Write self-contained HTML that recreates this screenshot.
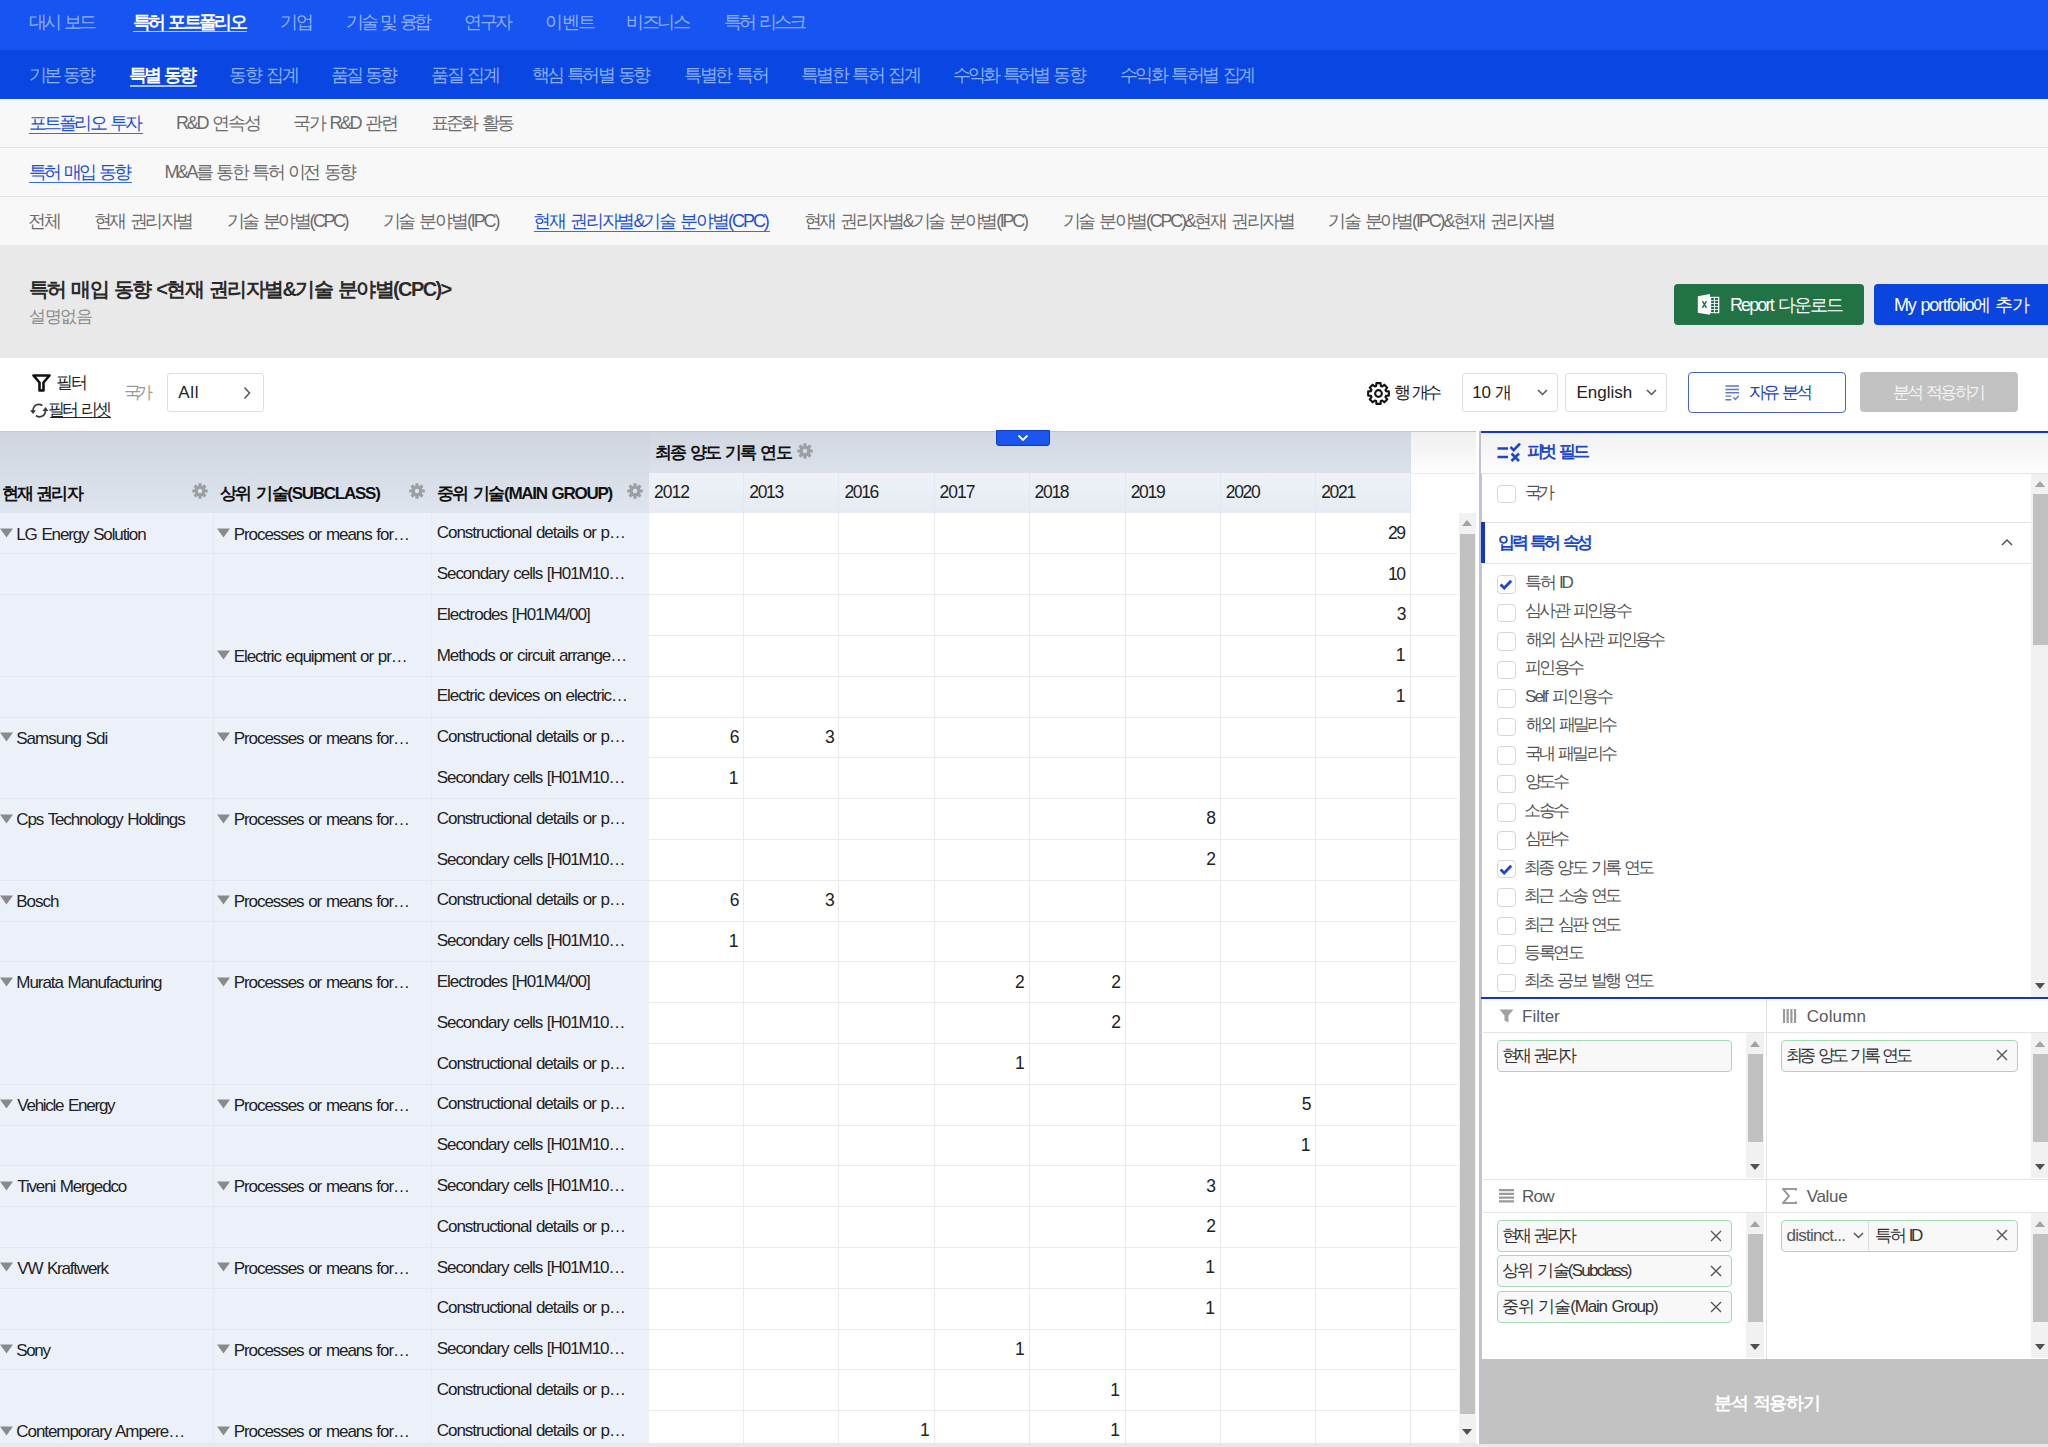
<!DOCTYPE html><html><head><meta charset="utf-8"><style>
html,body{margin:0;padding:0;width:2048px;height:1447px;overflow:hidden;background:#fff;font-family:"Liberation Sans",sans-serif;}
div,svg{position:absolute}
</style></head><body>
<div style="position:absolute;left:0px;top:0px;width:2048px;height:50px;background:#1854f1"></div>
<div style="position:absolute;left:0px;top:50px;width:2048px;height:49px;background:#0a47e2"></div>
<div style="position:absolute;left:133px;top:30.6px;width:114px;height:1.3px;background:#b4ccff"></div>
<div style="position:absolute;left:130px;top:85.2px;width:67px;height:1.5px;background:#a9c4ff"></div>
<div style="position:absolute;left:0px;top:99px;width:2048px;height:146px;background:#f8f8f8"></div>
<div style="position:absolute;left:0px;top:147px;width:2048px;height:1px;background:#e3e3e3"></div>
<div style="position:absolute;left:0px;top:196px;width:2048px;height:1px;background:#e3e3e3"></div>
<div style="position:absolute;left:29px;top:132.8px;width:114px;height:1.2px;background:#3b6be3"></div>
<div style="position:absolute;left:29px;top:181.8px;width:103px;height:1.2px;background:#3b6be3"></div>
<div style="position:absolute;left:534px;top:230.8px;width:236px;height:1.2px;background:#3b6be3"></div>
<div style="position:absolute;left:0px;top:245px;width:2048px;height:113px;background:#e9e9e9"></div>
<div style="position:absolute;left:1674px;top:284px;width:190px;height:41px;background:#217346;border-radius:4px"></div>
<div style="position:absolute;left:1874px;top:284px;width:180px;height:41px;background:#0b45e0;border-radius:4px"></div>
<svg style="position:absolute;left:1696px;top:293px" width="26" height="24" viewBox="0 0 26 24">
<rect x="13.5" y="3.8" width="9.8" height="16.4" fill="#fff"/><rect x="15.1" y="5.0" width="3.0" height="2.2" fill="#217346"/><rect x="15.1" y="8.0" width="3.0" height="2.2" fill="#217346"/><rect x="15.1" y="11.0" width="3.0" height="2.2" fill="#217346"/><rect x="15.1" y="14.0" width="3.0" height="2.2" fill="#217346"/><rect x="15.1" y="17.0" width="3.0" height="2.2" fill="#217346"/><rect x="19.0" y="5.0" width="3.0" height="2.2" fill="#217346"/><rect x="19.0" y="8.0" width="3.0" height="2.2" fill="#217346"/><rect x="19.0" y="11.0" width="3.0" height="2.2" fill="#217346"/><rect x="19.0" y="14.0" width="3.0" height="2.2" fill="#217346"/><rect x="19.0" y="17.0" width="3.0" height="2.2" fill="#217346"/>
<path d="M1.8 3.2L14 1v20.8L1.8 19.8z" fill="#fff"/>
<path d="M6.4 8.2l4 6.6M10.4 8.2l-4 6.6" stroke="#217346" stroke-width="1.5"/>
</svg>
<div style="position:absolute;left:0px;top:358px;width:2048px;height:73px;background:#ffffff"></div>
<svg style="position:absolute;left:32px;top:374px" width="19" height="18" viewBox="0 0 19 18">
<path d="M1.5 1.5h16l-6 7v8h-4v-8z" fill="none" stroke="#111" stroke-width="2.6" stroke-linejoin="round"/></svg>
<svg style="position:absolute;left:28px;top:400px" width="22" height="20" viewBox="0 0 22 20">
<path d="M13.8 5.2C11 3.3 5.6 4.3 5 10.6" fill="none" stroke="#3a3a3a" stroke-width="1.7" stroke-linecap="round"/><path d="M2 10.2h6L5 14z" fill="#3a3a3a"/>
<path d="M8.6 16C11.4 17.8 17 16.8 17.5 10.6" fill="none" stroke="#3a3a3a" stroke-width="1.7" stroke-linecap="round"/><path d="M14.5 11h6l-3-4z" fill="#3a3a3a"/></svg>
<div style="position:absolute;left:49.5px;top:416.8px;width:61.5px;height:1.3px;background:#222"></div>
<div style="position:absolute;left:167px;top:372.5px;width:96.5px;height:39px;border:1px solid #dedede;border-radius:3px;box-sizing:border-box;background:#fff"></div>
<svg style="position:absolute;left:242px;top:386px" width="10" height="14" viewBox="0 0 10 14"><path d="M2.5 1.5l5 5.5-5 5.5" fill="none" stroke="#555" stroke-width="1.5"/></svg>
<svg style="position:absolute;left:1366.5px;top:382px" width="23" height="23" viewBox="0 0 24 24">
<path d="M9.58 4.17 L9.81 1.22 L14.19 1.22 L14.42 4.17 L15.83 4.75 L18.08 2.83 L21.17 5.92 L19.25 8.17 L19.83 9.58 L22.78 9.81 L22.78 14.19 L19.83 14.42 L19.25 15.83 L21.17 18.08 L18.08 21.17 L15.83 19.25 L14.42 19.83 L14.19 22.78 L9.81 22.78 L9.58 19.83 L8.17 19.25 L5.92 21.17 L2.83 18.08 L4.75 15.83 L4.17 14.42 L1.22 14.19 L1.22 9.81 L4.17 9.58 L4.75 8.17 L2.83 5.92 L5.92 2.83 L8.17 4.75Z" fill="none" stroke="#111" stroke-width="2.2" stroke-linejoin="round"/>
<circle cx="12" cy="12" r="3.5" fill="none" stroke="#111" stroke-width="2.2"/></svg>
<div style="position:absolute;left:1461.5px;top:372.5px;width:96px;height:39.5px;border:1px solid #dedede;border-radius:3px;box-sizing:border-box;background:#fff"></div>
<svg style="position:absolute;left:1537px;top:389px" width="11" height="7" viewBox="0 0 11 7"><path d="M1 1l4.5 4.5L10 1" fill="none" stroke="#555" stroke-width="1.5"/></svg>
<div style="position:absolute;left:1564.5px;top:372.5px;width:102.5px;height:39.5px;border:1px solid #dedede;border-radius:3px;box-sizing:border-box;background:#fff"></div>
<svg style="position:absolute;left:1645.5px;top:389px" width="11" height="7" viewBox="0 0 11 7"><path d="M1 1l4.5 4.5L10 1" fill="none" stroke="#555" stroke-width="1.5"/></svg>
<div style="position:absolute;left:1687.5px;top:372px;width:158.5px;height:40.5px;border:1.6px solid #4a66c0;border-radius:4px;box-sizing:border-box;background:#fff"></div>
<svg style="position:absolute;left:1724px;top:384px" width="17" height="17" viewBox="0 0 17 17">
<path d="M1.5 2h13.5M1.5 5.5h13.5M1.5 8.8h13.5M1.5 12.1h5.7M1.5 15.8h5.7" stroke="#5f77c4" stroke-width="1.4"/><path d="M9.5 13.2l2 2.3 3.2-3.8" fill="none" stroke="#5f77c4" stroke-width="1.4"/></svg>
<div style="position:absolute;left:1859.5px;top:372px;width:158px;height:40px;background:#c2c2c2;border-radius:4px"></div>
<div style="position:absolute;left:0px;top:430.5px;width:1482px;height:1.5px;background:#c4c6ca"></div>
<div style="position:absolute;left:0px;top:432px;width:649px;height:81px;background:linear-gradient(#cfd5de,#dfe5ee)"></div>
<div style="position:absolute;left:649px;top:432px;width:762px;height:40.5px;background:linear-gradient(#d2d8e1,#dbe1ea)"></div>
<div style="position:absolute;left:649px;top:472.5px;width:762px;height:40.5px;background:linear-gradient(#eef2f8,#e6ebf3)"></div>
<div style="position:absolute;left:1411px;top:432px;width:68px;height:41px;background:linear-gradient(#efefef,#fdfdfd)"></div>
<div style="position:absolute;left:1411px;top:472.5px;width:68px;height:1px;background:#ececec"></div>
<div style="position:absolute;left:0px;top:513px;width:649px;height:934px;background:#ecf1f9"></div>
<div style="position:absolute;left:649px;top:513px;width:809px;height:934px;background:#ffffff"></div>
<div style="position:absolute;left:1458px;top:513px;width:20px;height:934px;background:#ffffff"></div>
<div style="position:absolute;left:743.2px;top:472.5px;width:1px;height:40px;background:#e3e8f0"></div>
<div style="position:absolute;left:743.2px;top:513px;width:1px;height:934px;background:#ebebeb"></div>
<div style="position:absolute;left:838.1px;top:472.5px;width:1px;height:40px;background:#e3e8f0"></div>
<div style="position:absolute;left:838.1px;top:513px;width:1px;height:934px;background:#ebebeb"></div>
<div style="position:absolute;left:934.0px;top:472.5px;width:1px;height:40px;background:#e3e8f0"></div>
<div style="position:absolute;left:934.0px;top:513px;width:1px;height:934px;background:#ebebeb"></div>
<div style="position:absolute;left:1028.9px;top:472.5px;width:1px;height:40px;background:#e3e8f0"></div>
<div style="position:absolute;left:1028.9px;top:513px;width:1px;height:934px;background:#ebebeb"></div>
<div style="position:absolute;left:1124.8px;top:472.5px;width:1px;height:40px;background:#e3e8f0"></div>
<div style="position:absolute;left:1124.8px;top:513px;width:1px;height:934px;background:#ebebeb"></div>
<div style="position:absolute;left:1219.7px;top:472.5px;width:1px;height:40px;background:#e3e8f0"></div>
<div style="position:absolute;left:1219.7px;top:513px;width:1px;height:934px;background:#ebebeb"></div>
<div style="position:absolute;left:1315.3px;top:472.5px;width:1px;height:40px;background:#e3e8f0"></div>
<div style="position:absolute;left:1315.3px;top:513px;width:1px;height:934px;background:#ebebeb"></div>
<div style="position:absolute;left:1410.2px;top:472.5px;width:1px;height:40px;background:#e3e8f0"></div>
<div style="position:absolute;left:1410.2px;top:513px;width:1px;height:934px;background:#ebebeb"></div>
<div style="position:absolute;left:212.5px;top:513px;width:1px;height:934px;background:#e6eaf1"></div>
<div style="position:absolute;left:430.5px;top:513px;width:1px;height:934px;background:#e6eaf1"></div>
<div style="position:absolute;left:0px;top:553.3px;width:649px;height:1px;background:#e2e7ef"></div>
<div style="position:absolute;left:649px;top:553.3px;width:809px;height:1px;background:#ebebeb"></div>
<div style="position:absolute;left:0px;top:594.1px;width:649px;height:1px;background:#e2e7ef"></div>
<div style="position:absolute;left:649px;top:594.1px;width:809px;height:1px;background:#ebebeb"></div>
<div style="position:absolute;left:649px;top:634.9px;width:809px;height:1px;background:#ebebeb"></div>
<div style="position:absolute;left:0px;top:675.7px;width:649px;height:1px;background:#e2e7ef"></div>
<div style="position:absolute;left:649px;top:675.7px;width:809px;height:1px;background:#ebebeb"></div>
<div style="position:absolute;left:0px;top:716.5px;width:649px;height:1px;background:#e2e7ef"></div>
<div style="position:absolute;left:649px;top:716.5px;width:809px;height:1px;background:#ebebeb"></div>
<div style="position:absolute;left:649px;top:757.3px;width:809px;height:1px;background:#ebebeb"></div>
<div style="position:absolute;left:0px;top:798.1px;width:649px;height:1px;background:#e2e7ef"></div>
<div style="position:absolute;left:649px;top:798.1px;width:809px;height:1px;background:#ebebeb"></div>
<div style="position:absolute;left:649px;top:838.9px;width:809px;height:1px;background:#ebebeb"></div>
<div style="position:absolute;left:0px;top:879.7px;width:649px;height:1px;background:#e2e7ef"></div>
<div style="position:absolute;left:649px;top:879.7px;width:809px;height:1px;background:#ebebeb"></div>
<div style="position:absolute;left:0px;top:920.5px;width:649px;height:1px;background:#e2e7ef"></div>
<div style="position:absolute;left:649px;top:920.5px;width:809px;height:1px;background:#ebebeb"></div>
<div style="position:absolute;left:0px;top:961.3px;width:649px;height:1px;background:#e2e7ef"></div>
<div style="position:absolute;left:649px;top:961.3px;width:809px;height:1px;background:#ebebeb"></div>
<div style="position:absolute;left:649px;top:1002.1px;width:809px;height:1px;background:#ebebeb"></div>
<div style="position:absolute;left:649px;top:1042.9px;width:809px;height:1px;background:#ebebeb"></div>
<div style="position:absolute;left:0px;top:1083.7px;width:649px;height:1px;background:#e2e7ef"></div>
<div style="position:absolute;left:649px;top:1083.7px;width:809px;height:1px;background:#ebebeb"></div>
<div style="position:absolute;left:0px;top:1124.5px;width:649px;height:1px;background:#e2e7ef"></div>
<div style="position:absolute;left:649px;top:1124.5px;width:809px;height:1px;background:#ebebeb"></div>
<div style="position:absolute;left:0px;top:1165.3px;width:649px;height:1px;background:#e2e7ef"></div>
<div style="position:absolute;left:649px;top:1165.3px;width:809px;height:1px;background:#ebebeb"></div>
<div style="position:absolute;left:0px;top:1206.1px;width:649px;height:1px;background:#e2e7ef"></div>
<div style="position:absolute;left:649px;top:1206.1px;width:809px;height:1px;background:#ebebeb"></div>
<div style="position:absolute;left:0px;top:1246.9px;width:649px;height:1px;background:#e2e7ef"></div>
<div style="position:absolute;left:649px;top:1246.9px;width:809px;height:1px;background:#ebebeb"></div>
<div style="position:absolute;left:0px;top:1287.7px;width:649px;height:1px;background:#e2e7ef"></div>
<div style="position:absolute;left:649px;top:1287.7px;width:809px;height:1px;background:#ebebeb"></div>
<div style="position:absolute;left:0px;top:1328.5px;width:649px;height:1px;background:#e2e7ef"></div>
<div style="position:absolute;left:649px;top:1328.5px;width:809px;height:1px;background:#ebebeb"></div>
<div style="position:absolute;left:0px;top:1369.3px;width:649px;height:1px;background:#e2e7ef"></div>
<div style="position:absolute;left:649px;top:1369.3px;width:809px;height:1px;background:#ebebeb"></div>
<div style="position:absolute;left:649px;top:1410.1px;width:809px;height:1px;background:#ebebeb"></div>
<div style="position:absolute;left:0px;top:1450.9px;width:649px;height:1px;background:#e2e7ef"></div>
<div style="position:absolute;left:649px;top:1450.9px;width:809px;height:1px;background:#ebebeb"></div>
<svg style="position:absolute;left:191.5px;top:482.5px" width="16" height="16" viewBox="0 0 24 24"><g fill="#9c9fa4"><rect x="9.6" y="0.3" width="4.8" height="6" rx="1" transform="rotate(0 12 12)"/><rect x="9.6" y="0.3" width="4.8" height="6" rx="1" transform="rotate(45 12 12)"/><rect x="9.6" y="0.3" width="4.8" height="6" rx="1" transform="rotate(90 12 12)"/><rect x="9.6" y="0.3" width="4.8" height="6" rx="1" transform="rotate(135 12 12)"/><rect x="9.6" y="0.3" width="4.8" height="6" rx="1" transform="rotate(180 12 12)"/><rect x="9.6" y="0.3" width="4.8" height="6" rx="1" transform="rotate(225 12 12)"/><rect x="9.6" y="0.3" width="4.8" height="6" rx="1" transform="rotate(270 12 12)"/><rect x="9.6" y="0.3" width="4.8" height="6" rx="1" transform="rotate(315 12 12)"/><circle cx="12" cy="12" r="8.3"/></g>
<circle cx="12" cy="12" r="3.3" fill="#dde3ec"/></svg>
<svg style="position:absolute;left:409.3px;top:482.5px" width="16" height="16" viewBox="0 0 24 24"><g fill="#9c9fa4"><rect x="9.6" y="0.3" width="4.8" height="6" rx="1" transform="rotate(0 12 12)"/><rect x="9.6" y="0.3" width="4.8" height="6" rx="1" transform="rotate(45 12 12)"/><rect x="9.6" y="0.3" width="4.8" height="6" rx="1" transform="rotate(90 12 12)"/><rect x="9.6" y="0.3" width="4.8" height="6" rx="1" transform="rotate(135 12 12)"/><rect x="9.6" y="0.3" width="4.8" height="6" rx="1" transform="rotate(180 12 12)"/><rect x="9.6" y="0.3" width="4.8" height="6" rx="1" transform="rotate(225 12 12)"/><rect x="9.6" y="0.3" width="4.8" height="6" rx="1" transform="rotate(270 12 12)"/><rect x="9.6" y="0.3" width="4.8" height="6" rx="1" transform="rotate(315 12 12)"/><circle cx="12" cy="12" r="8.3"/></g>
<circle cx="12" cy="12" r="3.3" fill="#dde3ec"/></svg>
<svg style="position:absolute;left:627px;top:482.5px" width="16" height="16" viewBox="0 0 24 24"><g fill="#9c9fa4"><rect x="9.6" y="0.3" width="4.8" height="6" rx="1" transform="rotate(0 12 12)"/><rect x="9.6" y="0.3" width="4.8" height="6" rx="1" transform="rotate(45 12 12)"/><rect x="9.6" y="0.3" width="4.8" height="6" rx="1" transform="rotate(90 12 12)"/><rect x="9.6" y="0.3" width="4.8" height="6" rx="1" transform="rotate(135 12 12)"/><rect x="9.6" y="0.3" width="4.8" height="6" rx="1" transform="rotate(180 12 12)"/><rect x="9.6" y="0.3" width="4.8" height="6" rx="1" transform="rotate(225 12 12)"/><rect x="9.6" y="0.3" width="4.8" height="6" rx="1" transform="rotate(270 12 12)"/><rect x="9.6" y="0.3" width="4.8" height="6" rx="1" transform="rotate(315 12 12)"/><circle cx="12" cy="12" r="8.3"/></g>
<circle cx="12" cy="12" r="3.3" fill="#dde3ec"/></svg>
<svg style="position:absolute;left:796.5px;top:443px" width="16" height="16" viewBox="0 0 24 24"><g fill="#9c9fa4"><rect x="9.6" y="0.3" width="4.8" height="6" rx="1" transform="rotate(0 12 12)"/><rect x="9.6" y="0.3" width="4.8" height="6" rx="1" transform="rotate(45 12 12)"/><rect x="9.6" y="0.3" width="4.8" height="6" rx="1" transform="rotate(90 12 12)"/><rect x="9.6" y="0.3" width="4.8" height="6" rx="1" transform="rotate(135 12 12)"/><rect x="9.6" y="0.3" width="4.8" height="6" rx="1" transform="rotate(180 12 12)"/><rect x="9.6" y="0.3" width="4.8" height="6" rx="1" transform="rotate(225 12 12)"/><rect x="9.6" y="0.3" width="4.8" height="6" rx="1" transform="rotate(270 12 12)"/><rect x="9.6" y="0.3" width="4.8" height="6" rx="1" transform="rotate(315 12 12)"/><circle cx="12" cy="12" r="8.3"/></g>
<circle cx="12" cy="12" r="3.3" fill="#d6dce5"/></svg>
<div style="position:absolute;left:996px;top:430px;width:54px;height:16px;background:#1b55ee;border:1px solid #0a3ccc;box-sizing:border-box;border-radius:0 0 3px 3px"></div>
<svg style="position:absolute;left:1017px;top:434px" width="12" height="8" viewBox="0 0 12 8"><path d="M1.5 1.5l4.5 4.5 4.5-4.5" fill="none" stroke="#fff" stroke-width="1.8"/></svg>
<svg style="position:absolute;left:0px;top:527.9px" width="13" height="10" viewBox="0 0 13 10"><path d="M0 0.5h13L6.5 9.5z" fill="#8a8a8a"/></svg>
<svg style="position:absolute;left:217px;top:527.9px" width="13" height="10" viewBox="0 0 13 10"><path d="M0 0.5h13L6.5 9.5z" fill="#8a8a8a"/></svg>
<svg style="position:absolute;left:217px;top:650.3px" width="13" height="10" viewBox="0 0 13 10"><path d="M0 0.5h13L6.5 9.5z" fill="#8a8a8a"/></svg>
<svg style="position:absolute;left:0px;top:731.9px" width="13" height="10" viewBox="0 0 13 10"><path d="M0 0.5h13L6.5 9.5z" fill="#8a8a8a"/></svg>
<svg style="position:absolute;left:217px;top:731.9px" width="13" height="10" viewBox="0 0 13 10"><path d="M0 0.5h13L6.5 9.5z" fill="#8a8a8a"/></svg>
<svg style="position:absolute;left:0px;top:813.4999999999999px" width="13" height="10" viewBox="0 0 13 10"><path d="M0 0.5h13L6.5 9.5z" fill="#8a8a8a"/></svg>
<svg style="position:absolute;left:217px;top:813.4999999999999px" width="13" height="10" viewBox="0 0 13 10"><path d="M0 0.5h13L6.5 9.5z" fill="#8a8a8a"/></svg>
<svg style="position:absolute;left:0px;top:895.1px" width="13" height="10" viewBox="0 0 13 10"><path d="M0 0.5h13L6.5 9.5z" fill="#8a8a8a"/></svg>
<svg style="position:absolute;left:217px;top:895.1px" width="13" height="10" viewBox="0 0 13 10"><path d="M0 0.5h13L6.5 9.5z" fill="#8a8a8a"/></svg>
<svg style="position:absolute;left:0px;top:976.6999999999999px" width="13" height="10" viewBox="0 0 13 10"><path d="M0 0.5h13L6.5 9.5z" fill="#8a8a8a"/></svg>
<svg style="position:absolute;left:217px;top:976.6999999999999px" width="13" height="10" viewBox="0 0 13 10"><path d="M0 0.5h13L6.5 9.5z" fill="#8a8a8a"/></svg>
<svg style="position:absolute;left:0px;top:1099.1px" width="13" height="10" viewBox="0 0 13 10"><path d="M0 0.5h13L6.5 9.5z" fill="#8a8a8a"/></svg>
<svg style="position:absolute;left:217px;top:1099.1px" width="13" height="10" viewBox="0 0 13 10"><path d="M0 0.5h13L6.5 9.5z" fill="#8a8a8a"/></svg>
<svg style="position:absolute;left:0px;top:1180.7px" width="13" height="10" viewBox="0 0 13 10"><path d="M0 0.5h13L6.5 9.5z" fill="#8a8a8a"/></svg>
<svg style="position:absolute;left:217px;top:1180.7px" width="13" height="10" viewBox="0 0 13 10"><path d="M0 0.5h13L6.5 9.5z" fill="#8a8a8a"/></svg>
<svg style="position:absolute;left:0px;top:1262.3000000000002px" width="13" height="10" viewBox="0 0 13 10"><path d="M0 0.5h13L6.5 9.5z" fill="#8a8a8a"/></svg>
<svg style="position:absolute;left:217px;top:1262.3000000000002px" width="13" height="10" viewBox="0 0 13 10"><path d="M0 0.5h13L6.5 9.5z" fill="#8a8a8a"/></svg>
<svg style="position:absolute;left:0px;top:1343.9px" width="13" height="10" viewBox="0 0 13 10"><path d="M0 0.5h13L6.5 9.5z" fill="#8a8a8a"/></svg>
<svg style="position:absolute;left:217px;top:1343.9px" width="13" height="10" viewBox="0 0 13 10"><path d="M0 0.5h13L6.5 9.5z" fill="#8a8a8a"/></svg>
<svg style="position:absolute;left:0px;top:1425.5px" width="13" height="10" viewBox="0 0 13 10"><path d="M0 0.5h13L6.5 9.5z" fill="#8a8a8a"/></svg>
<svg style="position:absolute;left:217px;top:1425.5px" width="13" height="10" viewBox="0 0 13 10"><path d="M0 0.5h13L6.5 9.5z" fill="#8a8a8a"/></svg>
<div style="position:absolute;left:0px;top:1443px;width:1478px;height:4px;background:#e8e8e8"></div>
<div style="position:absolute;left:1458.5px;top:513px;width:17.5px;height:930px;background:#f1f1f1"></div>
<div style="position:absolute;left:1460px;top:534px;width:15px;height:880px;background:#c1c1c1"></div>
<svg style="position:absolute;left:1462px;top:520px" width="10" height="6" viewBox="0 0 10 6"><path d="M0 6L5 0l5 6z" fill="#a3a3a3"/></svg>
<svg style="position:absolute;left:1462px;top:1429px" width="10" height="6" viewBox="0 0 10 6"><path d="M0 0h10L5 6z" fill="#505050"/></svg>
<div style="position:absolute;left:1476px;top:431px;width:572px;height:1016px;background:#ffffff"></div>
<div style="position:absolute;left:1478.5px;top:431px;width:3px;height:1016px;background:#bfc4d2"></div>
<div style="position:absolute;left:1481px;top:431px;width:567px;height:2.4px;background:#1535c4"></div>
<div style="position:absolute;left:1481px;top:433.4px;width:567px;height:40px;background:linear-gradient(#f1f1f1,#fdfdfd)"></div>
<div style="position:absolute;left:1481px;top:472.5px;width:567px;height:1px;background:#e2e2e2"></div>
<svg style="position:absolute;left:1497px;top:443px" width="25" height="19" viewBox="0 0 25 19">
<path d="M0.5 5.5h10.5M0.5 14h10.5" stroke="#1d47c8" stroke-width="2.6"/>
<path d="M13.5 4l3.2 3.2 6.3-6.7" fill="none" stroke="#1d47c8" stroke-width="2.6"/>
<path d="M14.5 10.5l7.5 7.5M22 10.5l-7.5 7.5" stroke="#1d47c8" stroke-width="2.6"/></svg>
<div style="position:absolute;left:1497px;top:484.5px;width:18.5px;height:18.5px;border:1.2px solid #d6d6d6;border-radius:4px;box-sizing:border-box;background:#fff"></div>
<div style="position:absolute;left:1481px;top:522px;width:550px;height:1px;background:#e4e4e4"></div>
<div style="position:absolute;left:1481px;top:522px;width:3.5px;height:41px;background:#1535c4"></div>
<div style="position:absolute;left:1481px;top:562.5px;width:550px;height:1px;background:#e4e4e4"></div>
<svg style="position:absolute;left:2001px;top:538px" width="12" height="8" viewBox="0 0 12 8"><path d="M1 7l5-5 5 5" fill="none" stroke="#555" stroke-width="1.5"/></svg>
<div style="position:absolute;left:1497px;top:575.3px;width:18.5px;height:18.5px;border:1.2px solid #d6d6d6;border-radius:4px;box-sizing:border-box;background:#fff"></div>
<svg style="position:absolute;left:1497px;top:575.3px" width="18" height="18" viewBox="0 0 18 18"><path d="M3.6 9.6l3.6 3.4 7-7.2" fill="none" stroke="#1d45d0" stroke-width="2.8"/></svg>
<div style="position:absolute;left:1497px;top:603.8px;width:18.5px;height:18.5px;border:1.2px solid #d6d6d6;border-radius:4px;box-sizing:border-box;background:#fff"></div>
<div style="position:absolute;left:1497px;top:632.2px;width:18.5px;height:18.5px;border:1.2px solid #d6d6d6;border-radius:4px;box-sizing:border-box;background:#fff"></div>
<div style="position:absolute;left:1497px;top:660.7px;width:18.5px;height:18.5px;border:1.2px solid #d6d6d6;border-radius:4px;box-sizing:border-box;background:#fff"></div>
<div style="position:absolute;left:1497px;top:689.1px;width:18.5px;height:18.5px;border:1.2px solid #d6d6d6;border-radius:4px;box-sizing:border-box;background:#fff"></div>
<div style="position:absolute;left:1497px;top:717.6px;width:18.5px;height:18.5px;border:1.2px solid #d6d6d6;border-radius:4px;box-sizing:border-box;background:#fff"></div>
<div style="position:absolute;left:1497px;top:746.1px;width:18.5px;height:18.5px;border:1.2px solid #d6d6d6;border-radius:4px;box-sizing:border-box;background:#fff"></div>
<div style="position:absolute;left:1497px;top:774.5px;width:18.5px;height:18.5px;border:1.2px solid #d6d6d6;border-radius:4px;box-sizing:border-box;background:#fff"></div>
<div style="position:absolute;left:1497px;top:803.0px;width:18.5px;height:18.5px;border:1.2px solid #d6d6d6;border-radius:4px;box-sizing:border-box;background:#fff"></div>
<div style="position:absolute;left:1497px;top:831.4px;width:18.5px;height:18.5px;border:1.2px solid #d6d6d6;border-radius:4px;box-sizing:border-box;background:#fff"></div>
<div style="position:absolute;left:1497px;top:859.9px;width:18.5px;height:18.5px;border:1.2px solid #d6d6d6;border-radius:4px;box-sizing:border-box;background:#fff"></div>
<svg style="position:absolute;left:1497px;top:859.9px" width="18" height="18" viewBox="0 0 18 18"><path d="M3.6 9.6l3.6 3.4 7-7.2" fill="none" stroke="#1d45d0" stroke-width="2.8"/></svg>
<div style="position:absolute;left:1497px;top:888.4px;width:18.5px;height:18.5px;border:1.2px solid #d6d6d6;border-radius:4px;box-sizing:border-box;background:#fff"></div>
<div style="position:absolute;left:1497px;top:916.8px;width:18.5px;height:18.5px;border:1.2px solid #d6d6d6;border-radius:4px;box-sizing:border-box;background:#fff"></div>
<div style="position:absolute;left:1497px;top:945.3px;width:18.5px;height:18.5px;border:1.2px solid #d6d6d6;border-radius:4px;box-sizing:border-box;background:#fff"></div>
<div style="position:absolute;left:1497px;top:973.7px;width:18.5px;height:18.5px;border:1.2px solid #d6d6d6;border-radius:4px;box-sizing:border-box;background:#fff"></div>
<div style="position:absolute;left:2031px;top:474px;width:17px;height:523px;background:#f1f1f1"></div>
<div style="position:absolute;left:2032.5px;top:494px;width:15.5px;height:151px;background:#c1c1c1"></div>
<svg style="position:absolute;left:2035px;top:481px" width="10" height="6" viewBox="0 0 10 6"><path d="M0 6L5 0l5 6z" fill="#a3a3a3"/></svg>
<svg style="position:absolute;left:2035px;top:983px" width="10" height="6" viewBox="0 0 10 6"><path d="M0 0h10L5 6z" fill="#505050"/></svg>
<div style="position:absolute;left:1481px;top:996.5px;width:567px;height:2.6px;background:#1535c4"></div>
<div style="position:absolute;left:1481px;top:1032px;width:567px;height:1px;background:#e4e4e4"></div>
<div style="position:absolute;left:1481px;top:1179px;width:567px;height:1px;background:#e4e4e4"></div>
<div style="position:absolute;left:1481px;top:1212px;width:567px;height:1px;background:#e4e4e4"></div>
<div style="position:absolute;left:1766px;top:999px;width:1px;height:360px;background:#e4e4e4"></div>
<svg style="position:absolute;left:1499px;top:1009px" width="15" height="14" viewBox="0 0 15 14"><path d="M0.5 0.5h14l-5 6v7l-4-2v-5z" fill="#a2a2a2"/></svg>
<svg style="position:absolute;left:1783px;top:1009px" width="15" height="14" viewBox="0 0 15 14"><path d="M1 0v14M4.7 0v14M8.4 0v14M12.1 0v14" stroke="#9a9a9a" stroke-width="2.2"/></svg>
<svg style="position:absolute;left:1499px;top:1189px" width="15" height="14" viewBox="0 0 15 14"><path d="M0 1.2h15M0 4.9h15M0 8.6h15M0 12.3h15" stroke="#9a9a9a" stroke-width="2.2"/></svg>
<svg style="position:absolute;left:1782px;top:1188px" width="15" height="16" viewBox="0 0 15 16"><path d="M14 2.5V1H1l6 7-6 7h13v-1.5" fill="none" stroke="#9a9a9a" stroke-width="2"/></svg>
<div style="position:absolute;left:1496.5px;top:1039.5px;width:235.5px;height:32px;border:1.3px solid #a3dbb3;border-radius:4px;box-sizing:border-box;background:#f8f8f8"></div>
<div style="position:absolute;left:1781px;top:1039.5px;width:236.5px;height:32px;border:1.3px solid #a3dbb3;border-radius:4px;box-sizing:border-box;background:#f8f8f8"></div>
<svg style="position:absolute;left:1995.5px;top:1049px" width="12" height="12" viewBox="0 0 12 12"><path d="M1 1l10 10M11 1L1 11" stroke="#555" stroke-width="1.4"/></svg>
<div style="position:absolute;left:1496.5px;top:1219.5px;width:235.5px;height:32px;border:1.3px solid #a3dbb3;border-radius:4px;box-sizing:border-box;background:#f8f8f8"></div>
<svg style="position:absolute;left:1710px;top:1229.5px" width="12" height="12" viewBox="0 0 12 12"><path d="M1 1l10 10M11 1L1 11" stroke="#555" stroke-width="1.4"/></svg>
<div style="position:absolute;left:1496.5px;top:1255px;width:235.5px;height:32px;border:1.3px solid #a3dbb3;border-radius:4px;box-sizing:border-box;background:#f8f8f8"></div>
<svg style="position:absolute;left:1710px;top:1265px" width="12" height="12" viewBox="0 0 12 12"><path d="M1 1l10 10M11 1L1 11" stroke="#555" stroke-width="1.4"/></svg>
<div style="position:absolute;left:1496.5px;top:1290.8px;width:235.5px;height:32px;border:1.3px solid #a3dbb3;border-radius:4px;box-sizing:border-box;background:#f8f8f8"></div>
<svg style="position:absolute;left:1710px;top:1300.8px" width="12" height="12" viewBox="0 0 12 12"><path d="M1 1l10 10M11 1L1 11" stroke="#555" stroke-width="1.4"/></svg>
<div style="position:absolute;left:1781px;top:1219.5px;width:236.5px;height:32px;border:1.3px solid #a3dbb3;border-radius:4px;box-sizing:border-box;background:#f8f8f8"></div>
<div style="position:absolute;left:1868px;top:1220.8px;width:1.2px;height:29.5px;background:#dcdcdc"></div>
<svg style="position:absolute;left:1852.5px;top:1232px" width="11" height="7" viewBox="0 0 11 7"><path d="M1 1l4.5 4.5L10 1" fill="none" stroke="#555" stroke-width="1.5"/></svg>
<svg style="position:absolute;left:1995.5px;top:1229px" width="12" height="12" viewBox="0 0 12 12"><path d="M1 1l10 10M11 1L1 11" stroke="#555" stroke-width="1.4"/></svg>
<div style="position:absolute;left:1746px;top:1033px;width:18px;height:145px;background:#f1f1f1"></div>
<div style="position:absolute;left:1747.5px;top:1054px;width:15.5px;height:88px;background:#c1c1c1"></div>
<svg style="position:absolute;left:1750px;top:1041px" width="10" height="6" viewBox="0 0 10 6"><path d="M0 6L5 0l5 6z" fill="#a3a3a3"/></svg>
<svg style="position:absolute;left:1750px;top:1164px" width="10" height="6" viewBox="0 0 10 6"><path d="M0 0h10L5 6z" fill="#505050"/></svg>
<div style="position:absolute;left:2031px;top:1033px;width:17px;height:145px;background:#f1f1f1"></div>
<div style="position:absolute;left:2032.5px;top:1054px;width:15.5px;height:88px;background:#c1c1c1"></div>
<svg style="position:absolute;left:2035px;top:1041px" width="10" height="6" viewBox="0 0 10 6"><path d="M0 6L5 0l5 6z" fill="#a3a3a3"/></svg>
<svg style="position:absolute;left:2035px;top:1164px" width="10" height="6" viewBox="0 0 10 6"><path d="M0 0h10L5 6z" fill="#505050"/></svg>
<div style="position:absolute;left:1746px;top:1213px;width:18px;height:145px;background:#f1f1f1"></div>
<div style="position:absolute;left:1747.5px;top:1234px;width:15.5px;height:88px;background:#c1c1c1"></div>
<svg style="position:absolute;left:1750px;top:1221px" width="10" height="6" viewBox="0 0 10 6"><path d="M0 6L5 0l5 6z" fill="#a3a3a3"/></svg>
<svg style="position:absolute;left:1750px;top:1344px" width="10" height="6" viewBox="0 0 10 6"><path d="M0 0h10L5 6z" fill="#505050"/></svg>
<div style="position:absolute;left:2031px;top:1213px;width:17px;height:145px;background:#f1f1f1"></div>
<div style="position:absolute;left:2032.5px;top:1234px;width:15.5px;height:88px;background:#c1c1c1"></div>
<svg style="position:absolute;left:2035px;top:1221px" width="10" height="6" viewBox="0 0 10 6"><path d="M0 6L5 0l5 6z" fill="#a3a3a3"/></svg>
<svg style="position:absolute;left:2035px;top:1344px" width="10" height="6" viewBox="0 0 10 6"><path d="M0 0h10L5 6z" fill="#505050"/></svg>
<div style="position:absolute;left:1481px;top:1358.5px;width:567px;height:85px;background:#c2c2c2"></div>
<div style="position:absolute;left:1476px;top:1443.5px;width:572px;height:3.5px;background:#e9e9e9"></div>
<div id="n1_0" style="position:absolute;left:29.00px;top:6.50px;font-size:18px;line-height:30px;font-weight:400;color:#8db0fd;white-space:nowrap;"><span style="display:inline-block;width:14.86px;white-space:pre">대</span><span style="display:inline-block;width:14.86px;white-space:pre">시</span><span style="display:inline-block;width:5.02px;white-space:pre"> </span><span style="display:inline-block;width:14.86px;white-space:pre">보</span><span style="display:inline-block;width:14.89px;white-space:pre">드</span></div>
<div id="n1_1" style="position:absolute;left:132.70px;top:6.50px;font-size:18px;line-height:30px;font-weight:700;color:#ffffff;white-space:nowrap;"><span style="display:inline-block;width:15.33px;white-space:pre">특</span><span style="display:inline-block;width:15.33px;white-space:pre">허</span><span style="display:inline-block;width:5.00px;white-space:pre"> </span><span style="display:inline-block;width:15.34px;white-space:pre">포</span><span style="display:inline-block;width:15.33px;white-space:pre">트</span><span style="display:inline-block;width:15.33px;white-space:pre">폴</span><span style="display:inline-block;width:15.33px;white-space:pre">리</span><span style="display:inline-block;width:15.36px;white-space:pre">오</span></div>
<div id="n1_2" style="position:absolute;left:280.00px;top:6.50px;font-size:18px;line-height:30px;font-weight:400;color:#8db0fd;white-space:nowrap;"><span style="display:inline-block;width:16.00px;white-space:pre">기</span><span style="display:inline-block;width:16.00px;white-space:pre">업</span></div>
<div id="n1_3" style="position:absolute;left:346.10px;top:6.50px;font-size:18px;line-height:30px;font-weight:400;color:#8db0fd;white-space:nowrap;"><span style="display:inline-block;width:14.55px;white-space:pre">기</span><span style="display:inline-block;width:14.55px;white-space:pre">술</span><span style="display:inline-block;width:5.00px;white-space:pre"> </span><span style="display:inline-block;width:14.55px;white-space:pre">및</span><span style="display:inline-block;width:5.00px;white-space:pre"> </span><span style="display:inline-block;width:14.55px;white-space:pre">융</span><span style="display:inline-block;width:14.58px;white-space:pre">합</span></div>
<div id="n1_4" style="position:absolute;left:464.00px;top:6.50px;font-size:18px;line-height:30px;font-weight:400;color:#8db0fd;white-space:nowrap;"><span style="display:inline-block;width:15.50px;white-space:pre">연</span><span style="display:inline-block;width:15.50px;white-space:pre">구</span><span style="display:inline-block;width:15.50px;white-space:pre">자</span></div>
<div id="n1_5" style="position:absolute;left:545.00px;top:6.50px;font-size:18px;line-height:30px;font-weight:400;color:#8db0fd;white-space:nowrap;"><span style="display:inline-block;width:16.50px;white-space:pre">이</span><span style="display:inline-block;width:16.50px;white-space:pre">벤</span><span style="display:inline-block;width:16.50px;white-space:pre">트</span></div>
<div id="n1_6" style="position:absolute;left:626.00px;top:6.50px;font-size:18px;line-height:30px;font-weight:400;color:#8db0fd;white-space:nowrap;"><span style="display:inline-block;width:15.66px;white-space:pre">비</span><span style="display:inline-block;width:15.67px;white-space:pre">즈</span><span style="display:inline-block;width:15.67px;white-space:pre">니</span><span style="display:inline-block;width:15.67px;white-space:pre">스</span></div>
<div id="n1_7" style="position:absolute;left:723.80px;top:6.50px;font-size:18px;line-height:30px;font-weight:400;color:#8db0fd;white-space:nowrap;"><span style="display:inline-block;width:15.09px;white-space:pre">특</span><span style="display:inline-block;width:15.09px;white-space:pre">허</span><span style="display:inline-block;width:5.00px;white-space:pre"> </span><span style="display:inline-block;width:15.11px;white-space:pre">리</span><span style="display:inline-block;width:15.09px;white-space:pre">스</span><span style="display:inline-block;width:15.12px;white-space:pre">크</span></div>
<div id="n2_0" style="position:absolute;left:29.00px;top:59.50px;font-size:18px;line-height:30px;font-weight:400;color:#8db0fd;white-space:nowrap;"><span style="display:inline-block;width:14.53px;white-space:pre">기</span><span style="display:inline-block;width:14.53px;white-space:pre">본</span><span style="display:inline-block;width:5.00px;white-space:pre"> </span><span style="display:inline-block;width:14.53px;white-space:pre">동</span><span style="display:inline-block;width:14.55px;white-space:pre">향</span></div>
<div id="n2_1" style="position:absolute;left:129.10px;top:59.50px;font-size:18px;line-height:30px;font-weight:700;color:#ffffff;white-space:nowrap;"><span style="display:inline-block;width:15.12px;white-space:pre">특</span><span style="display:inline-block;width:15.14px;white-space:pre">별</span><span style="display:inline-block;width:5.00px;white-space:pre"> </span><span style="display:inline-block;width:15.12px;white-space:pre">동</span><span style="display:inline-block;width:15.16px;white-space:pre">향</span></div>
<div id="n2_2" style="position:absolute;left:229.00px;top:59.50px;font-size:18px;line-height:30px;font-weight:400;color:#8db0fd;white-space:nowrap;"><span style="display:inline-block;width:16.00px;white-space:pre">동</span><span style="display:inline-block;width:16.00px;white-space:pre">향</span><span style="display:inline-block;width:5.00px;white-space:pre"> </span><span style="display:inline-block;width:16.00px;white-space:pre">집</span><span style="display:inline-block;width:16.02px;white-space:pre">계</span></div>
<div id="n2_3" style="position:absolute;left:331.00px;top:59.50px;font-size:18px;line-height:30px;font-weight:400;color:#8db0fd;white-space:nowrap;"><span style="display:inline-block;width:14.66px;white-space:pre">품</span><span style="display:inline-block;width:14.67px;white-space:pre">질</span><span style="display:inline-block;width:5.00px;white-space:pre"> </span><span style="display:inline-block;width:14.67px;white-space:pre">동</span><span style="display:inline-block;width:14.67px;white-space:pre">향</span></div>
<div id="n2_4" style="position:absolute;left:431.00px;top:59.50px;font-size:18px;line-height:30px;font-weight:400;color:#8db0fd;white-space:nowrap;"><span style="display:inline-block;width:15.66px;white-space:pre">품</span><span style="display:inline-block;width:15.67px;white-space:pre">질</span><span style="display:inline-block;width:5.00px;white-space:pre"> </span><span style="display:inline-block;width:15.67px;white-space:pre">집</span><span style="display:inline-block;width:15.67px;white-space:pre">계</span></div>
<div id="n2_5" style="position:absolute;left:532.00px;top:59.50px;font-size:18px;line-height:30px;font-weight:400;color:#8db0fd;white-space:nowrap;"><span style="display:inline-block;width:15.16px;white-space:pre">핵</span><span style="display:inline-block;width:15.17px;white-space:pre">심</span><span style="display:inline-block;width:5.00px;white-space:pre"> </span><span style="display:inline-block;width:15.17px;white-space:pre">특</span><span style="display:inline-block;width:15.16px;white-space:pre">허</span><span style="display:inline-block;width:15.17px;white-space:pre">별</span><span style="display:inline-block;width:5.00px;white-space:pre"> </span><span style="display:inline-block;width:15.17px;white-space:pre">동</span><span style="display:inline-block;width:15.17px;white-space:pre">향</span></div>
<div id="n2_6" style="position:absolute;left:683.80px;top:59.50px;font-size:18px;line-height:30px;font-weight:400;color:#8db0fd;white-space:nowrap;"><span style="display:inline-block;width:15.75px;white-space:pre">특</span><span style="display:inline-block;width:15.75px;white-space:pre">별</span><span style="display:inline-block;width:15.75px;white-space:pre">한</span><span style="display:inline-block;width:5.00px;white-space:pre"> </span><span style="display:inline-block;width:15.75px;white-space:pre">특</span><span style="display:inline-block;width:15.77px;white-space:pre">허</span></div>
<div id="n2_7" style="position:absolute;left:800.60px;top:59.50px;font-size:18px;line-height:30px;font-weight:400;color:#8db0fd;white-space:nowrap;"><span style="display:inline-block;width:15.53px;white-space:pre">특</span><span style="display:inline-block;width:15.53px;white-space:pre">별</span><span style="display:inline-block;width:15.53px;white-space:pre">한</span><span style="display:inline-block;width:5.00px;white-space:pre"> </span><span style="display:inline-block;width:15.53px;white-space:pre">특</span><span style="display:inline-block;width:15.53px;white-space:pre">허</span><span style="display:inline-block;width:5.00px;white-space:pre"> </span><span style="display:inline-block;width:15.53px;white-space:pre">집</span><span style="display:inline-block;width:15.55px;white-space:pre">계</span></div>
<div id="n2_8" style="position:absolute;left:952.50px;top:59.50px;font-size:18px;line-height:30px;font-weight:400;color:#8db0fd;white-space:nowrap;"><span style="display:inline-block;width:15.16px;white-space:pre">수</span><span style="display:inline-block;width:15.17px;white-space:pre">익</span><span style="display:inline-block;width:15.17px;white-space:pre">화</span><span style="display:inline-block;width:5.00px;white-space:pre"> </span><span style="display:inline-block;width:15.17px;white-space:pre">특</span><span style="display:inline-block;width:15.17px;white-space:pre">허</span><span style="display:inline-block;width:15.17px;white-space:pre">별</span><span style="display:inline-block;width:5.00px;white-space:pre"> </span><span style="display:inline-block;width:15.17px;white-space:pre">동</span><span style="display:inline-block;width:15.19px;white-space:pre">향</span></div>
<div id="n2_9" style="position:absolute;left:1120.00px;top:59.50px;font-size:18px;line-height:30px;font-weight:400;color:#8db0fd;white-space:nowrap;"><span style="display:inline-block;width:15.45px;white-space:pre">수</span><span style="display:inline-block;width:15.45px;white-space:pre">익</span><span style="display:inline-block;width:15.45px;white-space:pre">화</span><span style="display:inline-block;width:5.00px;white-space:pre"> </span><span style="display:inline-block;width:15.47px;white-space:pre">특</span><span style="display:inline-block;width:15.45px;white-space:pre">허</span><span style="display:inline-block;width:15.45px;white-space:pre">별</span><span style="display:inline-block;width:5.00px;white-space:pre"> </span><span style="display:inline-block;width:15.45px;white-space:pre">집</span><span style="display:inline-block;width:15.48px;white-space:pre">계</span></div>
<div id="r3_0" style="position:absolute;left:29.00px;top:108.00px;font-size:18px;line-height:30px;font-weight:500;color:#1d4fd6;white-space:nowrap;"><span style="display:inline-block;width:15.16px;white-space:pre">포</span><span style="display:inline-block;width:15.17px;white-space:pre">트</span><span style="display:inline-block;width:15.17px;white-space:pre">폴</span><span style="display:inline-block;width:15.16px;white-space:pre">리</span><span style="display:inline-block;width:15.17px;white-space:pre">오</span><span style="display:inline-block;width:5.00px;white-space:pre"> </span><span style="display:inline-block;width:15.17px;white-space:pre">투</span><span style="display:inline-block;width:15.17px;white-space:pre">자</span></div>
<div id="r3_1" style="position:absolute;left:176.00px;top:108.00px;font-size:18px;line-height:30px;font-weight:400;color:#6c6c6c;white-space:nowrap;"><span style="display:inline-block;width:10.72px;white-space:pre">R</span><span style="display:inline-block;width:9.72px;white-space:pre">&amp;</span><span style="display:inline-block;width:10.72px;white-space:pre">D</span><span style="display:inline-block;width:5.00px;white-space:pre"> </span><span style="display:inline-block;width:15.72px;white-space:pre">연</span><span style="display:inline-block;width:15.72px;white-space:pre">속</span><span style="display:inline-block;width:15.73px;white-space:pre">성</span></div>
<div id="r3_2" style="position:absolute;left:293.40px;top:108.00px;font-size:18px;line-height:30px;font-weight:400;color:#6c6c6c;white-space:nowrap;"><span style="display:inline-block;width:15.56px;white-space:pre">국</span><span style="display:inline-block;width:15.56px;white-space:pre">가</span><span style="display:inline-block;width:5.00px;white-space:pre"> </span><span style="display:inline-block;width:10.56px;white-space:pre">R</span><span style="display:inline-block;width:9.58px;white-space:pre">&amp;</span><span style="display:inline-block;width:10.56px;white-space:pre">D</span><span style="display:inline-block;width:5.00px;white-space:pre"> </span><span style="display:inline-block;width:15.58px;white-space:pre">관</span><span style="display:inline-block;width:15.58px;white-space:pre">련</span></div>
<div id="r3_3" style="position:absolute;left:430.70px;top:108.00px;font-size:18px;line-height:30px;font-weight:400;color:#6c6c6c;white-space:nowrap;"><span style="display:inline-block;width:15.34px;white-space:pre">표</span><span style="display:inline-block;width:15.34px;white-space:pre">준</span><span style="display:inline-block;width:15.36px;white-space:pre">화</span><span style="display:inline-block;width:5.00px;white-space:pre"> </span><span style="display:inline-block;width:15.34px;white-space:pre">활</span><span style="display:inline-block;width:15.38px;white-space:pre">동</span></div>
<div id="r4_0" style="position:absolute;left:29.00px;top:157.00px;font-size:18px;line-height:30px;font-weight:500;color:#1d4fd6;white-space:nowrap;"><span style="display:inline-block;width:14.95px;white-space:pre">특</span><span style="display:inline-block;width:14.95px;white-space:pre">허</span><span style="display:inline-block;width:5.00px;white-space:pre"> </span><span style="display:inline-block;width:14.97px;white-space:pre">매</span><span style="display:inline-block;width:14.95px;white-space:pre">입</span><span style="display:inline-block;width:5.00px;white-space:pre"> </span><span style="display:inline-block;width:14.97px;white-space:pre">동</span><span style="display:inline-block;width:14.97px;white-space:pre">향</span></div>
<div id="r4_1" style="position:absolute;left:164.60px;top:157.00px;font-size:18px;line-height:30px;font-weight:400;color:#6c6c6c;white-space:nowrap;"><span style="display:inline-block;width:12.42px;white-space:pre">M</span><span style="display:inline-block;width:9.44px;white-space:pre">&amp;</span><span style="display:inline-block;width:9.45px;white-space:pre">A</span><span style="display:inline-block;width:15.42px;white-space:pre">를</span><span style="display:inline-block;width:5.02px;white-space:pre"> </span><span style="display:inline-block;width:15.42px;white-space:pre">통</span><span style="display:inline-block;width:15.44px;white-space:pre">한</span><span style="display:inline-block;width:5.00px;white-space:pre"> </span><span style="display:inline-block;width:15.44px;white-space:pre">특</span><span style="display:inline-block;width:15.44px;white-space:pre">허</span><span style="display:inline-block;width:5.00px;white-space:pre"> </span><span style="display:inline-block;width:15.44px;white-space:pre">이</span><span style="display:inline-block;width:15.44px;white-space:pre">전</span><span style="display:inline-block;width:5.00px;white-space:pre"> </span><span style="display:inline-block;width:15.44px;white-space:pre">동</span><span style="display:inline-block;width:15.45px;white-space:pre">향</span></div>
<div id="r5_0" style="position:absolute;left:28.00px;top:206.00px;font-size:18px;line-height:30px;font-weight:400;color:#6c6c6c;white-space:nowrap;"><span style="display:inline-block;width:16.39px;white-space:pre">전</span><span style="display:inline-block;width:16.42px;white-space:pre">체</span></div>
<div id="r5_1" style="position:absolute;left:94.00px;top:206.00px;font-size:18px;line-height:30px;font-weight:400;color:#6c6c6c;white-space:nowrap;"><span style="display:inline-block;width:15.39px;white-space:pre">현</span><span style="display:inline-block;width:15.41px;white-space:pre">재</span><span style="display:inline-block;width:5.00px;white-space:pre"> </span><span style="display:inline-block;width:15.39px;white-space:pre">권</span><span style="display:inline-block;width:15.41px;white-space:pre">리</span><span style="display:inline-block;width:15.41px;white-space:pre">자</span><span style="display:inline-block;width:15.41px;white-space:pre">별</span></div>
<div id="r5_2" style="position:absolute;left:226.70px;top:206.00px;font-size:18px;line-height:30px;font-weight:400;color:#6c6c6c;white-space:nowrap;"><span style="display:inline-block;width:15.55px;white-space:pre">기</span><span style="display:inline-block;width:15.56px;white-space:pre">술</span><span style="display:inline-block;width:5.00px;white-space:pre"> </span><span style="display:inline-block;width:15.55px;white-space:pre">분</span><span style="display:inline-block;width:15.56px;white-space:pre">야</span><span style="display:inline-block;width:15.55px;white-space:pre">별</span><span style="display:inline-block;width:3.56px;white-space:pre">(</span><span style="display:inline-block;width:10.55px;white-space:pre">C</span><span style="display:inline-block;width:9.56px;white-space:pre">P</span><span style="display:inline-block;width:10.56px;white-space:pre">C</span><span style="display:inline-block;width:3.56px;white-space:pre">)</span></div>
<div id="r5_3" style="position:absolute;left:382.50px;top:206.00px;font-size:18px;line-height:30px;font-weight:400;color:#6c6c6c;white-space:nowrap;"><span style="display:inline-block;width:15.88px;white-space:pre">기</span><span style="display:inline-block;width:15.89px;white-space:pre">술</span><span style="display:inline-block;width:5.00px;white-space:pre"> </span><span style="display:inline-block;width:15.89px;white-space:pre">분</span><span style="display:inline-block;width:15.89px;white-space:pre">야</span><span style="display:inline-block;width:15.89px;white-space:pre">별</span><span style="display:inline-block;width:3.89px;white-space:pre">(</span><span style="display:inline-block;width:2.89px;white-space:pre">I</span><span style="display:inline-block;width:9.89px;white-space:pre">P</span><span style="display:inline-block;width:10.89px;white-space:pre">C</span><span style="display:inline-block;width:3.89px;white-space:pre">)</span></div>
<div id="r5_4" style="position:absolute;left:532.80px;top:206.00px;font-size:18px;line-height:30px;font-weight:500;color:#1d4fd6;white-space:nowrap;"><span style="display:inline-block;width:15.94px;white-space:pre">현</span><span style="display:inline-block;width:15.95px;white-space:pre">재</span><span style="display:inline-block;width:5.00px;white-space:pre"> </span><span style="display:inline-block;width:15.95px;white-space:pre">권</span><span style="display:inline-block;width:15.95px;white-space:pre">리</span><span style="display:inline-block;width:15.95px;white-space:pre">자</span><span style="display:inline-block;width:15.94px;white-space:pre">별</span><span style="display:inline-block;width:9.97px;white-space:pre">&amp;</span><span style="display:inline-block;width:15.94px;white-space:pre">기</span><span style="display:inline-block;width:15.95px;white-space:pre">술</span><span style="display:inline-block;width:5.00px;white-space:pre"> </span><span style="display:inline-block;width:15.95px;white-space:pre">분</span><span style="display:inline-block;width:15.95px;white-space:pre">야</span><span style="display:inline-block;width:15.95px;white-space:pre">별</span><span style="display:inline-block;width:3.94px;white-space:pre">(</span><span style="display:inline-block;width:10.95px;white-space:pre">C</span><span style="display:inline-block;width:9.95px;white-space:pre">P</span><span style="display:inline-block;width:10.95px;white-space:pre">C</span><span style="display:inline-block;width:3.95px;white-space:pre">)</span></div>
<div id="r5_5" style="position:absolute;left:803.50px;top:206.00px;font-size:18px;line-height:30px;font-weight:400;color:#6c6c6c;white-space:nowrap;"><span style="display:inline-block;width:15.72px;white-space:pre">현</span><span style="display:inline-block;width:15.72px;white-space:pre">재</span><span style="display:inline-block;width:5.00px;white-space:pre"> </span><span style="display:inline-block;width:15.73px;white-space:pre">권</span><span style="display:inline-block;width:15.72px;white-space:pre">리</span><span style="display:inline-block;width:15.73px;white-space:pre">자</span><span style="display:inline-block;width:15.72px;white-space:pre">별</span><span style="display:inline-block;width:9.73px;white-space:pre">&amp;</span><span style="display:inline-block;width:15.72px;white-space:pre">기</span><span style="display:inline-block;width:15.73px;white-space:pre">술</span><span style="display:inline-block;width:5.00px;white-space:pre"> </span><span style="display:inline-block;width:15.72px;white-space:pre">분</span><span style="display:inline-block;width:15.72px;white-space:pre">야</span><span style="display:inline-block;width:15.73px;white-space:pre">별</span><span style="display:inline-block;width:3.72px;white-space:pre">(</span><span style="display:inline-block;width:2.72px;white-space:pre">I</span><span style="display:inline-block;width:9.73px;white-space:pre">P</span><span style="display:inline-block;width:10.72px;white-space:pre">C</span><span style="display:inline-block;width:3.73px;white-space:pre">)</span></div>
<div id="r5_6" style="position:absolute;left:1062.50px;top:206.00px;font-size:18px;line-height:30px;font-weight:400;color:#6c6c6c;white-space:nowrap;"><span style="display:inline-block;width:15.72px;white-space:pre">기</span><span style="display:inline-block;width:15.72px;white-space:pre">술</span><span style="display:inline-block;width:5.00px;white-space:pre"> </span><span style="display:inline-block;width:15.73px;white-space:pre">분</span><span style="display:inline-block;width:15.72px;white-space:pre">야</span><span style="display:inline-block;width:15.73px;white-space:pre">별</span><span style="display:inline-block;width:3.72px;white-space:pre">(</span><span style="display:inline-block;width:10.72px;white-space:pre">C</span><span style="display:inline-block;width:9.73px;white-space:pre">P</span><span style="display:inline-block;width:10.72px;white-space:pre">C</span><span style="display:inline-block;width:3.72px;white-space:pre">)</span><span style="display:inline-block;width:9.73px;white-space:pre">&amp;</span><span style="display:inline-block;width:15.72px;white-space:pre">현</span><span style="display:inline-block;width:15.73px;white-space:pre">재</span><span style="display:inline-block;width:5.00px;white-space:pre"> </span><span style="display:inline-block;width:15.72px;white-space:pre">권</span><span style="display:inline-block;width:15.73px;white-space:pre">리</span><span style="display:inline-block;width:15.72px;white-space:pre">자</span><span style="display:inline-block;width:15.73px;white-space:pre">별</span></div>
<div id="r5_7" style="position:absolute;left:1327.80px;top:206.00px;font-size:18px;line-height:30px;font-weight:400;color:#6c6c6c;white-space:nowrap;"><span style="display:inline-block;width:15.86px;white-space:pre">기</span><span style="display:inline-block;width:15.86px;white-space:pre">술</span><span style="display:inline-block;width:5.00px;white-space:pre"> </span><span style="display:inline-block;width:15.86px;white-space:pre">분</span><span style="display:inline-block;width:15.86px;white-space:pre">야</span><span style="display:inline-block;width:15.86px;white-space:pre">별</span><span style="display:inline-block;width:3.86px;white-space:pre">(</span><span style="display:inline-block;width:2.86px;white-space:pre">I</span><span style="display:inline-block;width:9.88px;white-space:pre">P</span><span style="display:inline-block;width:10.86px;white-space:pre">C</span><span style="display:inline-block;width:3.86px;white-space:pre">)</span><span style="display:inline-block;width:9.86px;white-space:pre">&amp;</span><span style="display:inline-block;width:15.88px;white-space:pre">현</span><span style="display:inline-block;width:15.86px;white-space:pre">재</span><span style="display:inline-block;width:5.00px;white-space:pre"> </span><span style="display:inline-block;width:15.86px;white-space:pre">권</span><span style="display:inline-block;width:15.86px;white-space:pre">리</span><span style="display:inline-block;width:15.86px;white-space:pre">자</span><span style="display:inline-block;width:15.88px;white-space:pre">별</span></div>
<div id="title" style="position:absolute;left:29.00px;top:274.00px;font-size:20px;line-height:30px;font-weight:700;color:#2b2b2b;white-space:nowrap;"><span style="display:inline-block;width:18.42px;white-space:pre">특</span><span style="display:inline-block;width:18.44px;white-space:pre">허</span><span style="display:inline-block;width:5.56px;white-space:pre"> </span><span style="display:inline-block;width:18.42px;white-space:pre">매</span><span style="display:inline-block;width:18.44px;white-space:pre">입</span><span style="display:inline-block;width:5.56px;white-space:pre"> </span><span style="display:inline-block;width:18.42px;white-space:pre">동</span><span style="display:inline-block;width:18.44px;white-space:pre">향</span><span style="display:inline-block;width:5.56px;white-space:pre"> </span><span style="display:inline-block;width:10.11px;white-space:pre">&lt;</span><span style="display:inline-block;width:18.44px;white-space:pre">현</span><span style="display:inline-block;width:18.42px;white-space:pre">재</span><span style="display:inline-block;width:5.56px;white-space:pre"> </span><span style="display:inline-block;width:18.44px;white-space:pre">권</span><span style="display:inline-block;width:18.42px;white-space:pre">리</span><span style="display:inline-block;width:18.44px;white-space:pre">자</span><span style="display:inline-block;width:18.44px;white-space:pre">별</span><span style="display:inline-block;width:12.88px;white-space:pre">&amp;</span><span style="display:inline-block;width:18.44px;white-space:pre">기</span><span style="display:inline-block;width:18.42px;white-space:pre">술</span><span style="display:inline-block;width:5.56px;white-space:pre"> </span><span style="display:inline-block;width:18.44px;white-space:pre">분</span><span style="display:inline-block;width:18.42px;white-space:pre">야</span><span style="display:inline-block;width:18.44px;white-space:pre">별</span><span style="display:inline-block;width:5.09px;white-space:pre">(</span><span style="display:inline-block;width:12.88px;white-space:pre">C</span><span style="display:inline-block;width:11.78px;white-space:pre">P</span><span style="display:inline-block;width:12.88px;white-space:pre">C</span><span style="display:inline-block;width:5.09px;white-space:pre">)</span><span style="display:inline-block;width:10.12px;white-space:pre">&gt;</span></div>
<div id="desc" style="position:absolute;left:29.00px;top:301.60px;font-size:17px;line-height:30px;font-weight:400;color:#8c8c8c;white-space:nowrap;"><span style="display:inline-block;width:15.59px;white-space:pre">설</span><span style="display:inline-block;width:15.59px;white-space:pre">명</span><span style="display:inline-block;width:15.61px;white-space:pre">없</span><span style="display:inline-block;width:15.61px;white-space:pre">음</span></div>
<div id="rep" style="position:absolute;left:1730.00px;top:290.00px;font-size:18px;line-height:30px;font-weight:400;color:#ffffff;white-space:nowrap;"><span style="display:inline-block;width:11.12px;white-space:pre">R</span><span style="display:inline-block;width:8.14px;white-space:pre">e</span><span style="display:inline-block;width:8.14px;white-space:pre">p</span><span style="display:inline-block;width:8.16px;white-space:pre">o</span><span style="display:inline-block;width:4.12px;white-space:pre">r</span><span style="display:inline-block;width:3.12px;white-space:pre">t</span><span style="display:inline-block;width:5.00px;white-space:pre"> </span><span style="display:inline-block;width:16.14px;white-space:pre">다</span><span style="display:inline-block;width:16.12px;white-space:pre">운</span><span style="display:inline-block;width:16.14px;white-space:pre">로</span><span style="display:inline-block;width:16.14px;white-space:pre">드</span></div>
<div id="myp" style="position:absolute;left:1894.00px;top:290.00px;font-size:18px;line-height:30px;font-weight:400;color:#ffffff;white-space:nowrap;"><span style="display:inline-block;width:13.75px;white-space:pre">M</span><span style="display:inline-block;width:7.78px;white-space:pre">y</span><span style="display:inline-block;width:5.00px;white-space:pre"> </span><span style="display:inline-block;width:8.78px;white-space:pre">p</span><span style="display:inline-block;width:8.77px;white-space:pre">o</span><span style="display:inline-block;width:4.77px;white-space:pre">r</span><span style="display:inline-block;width:3.78px;white-space:pre">t</span><span style="display:inline-block;width:3.77px;white-space:pre">f</span><span style="display:inline-block;width:8.78px;white-space:pre">o</span><span style="display:inline-block;width:2.77px;white-space:pre">l</span><span style="display:inline-block;width:2.77px;white-space:pre">i</span><span style="display:inline-block;width:8.78px;white-space:pre">o</span><span style="display:inline-block;width:16.77px;white-space:pre">에</span><span style="display:inline-block;width:5.00px;white-space:pre"> </span><span style="display:inline-block;width:16.77px;white-space:pre">추</span><span style="display:inline-block;width:16.80px;white-space:pre">가</span></div>
<div id="filt" style="position:absolute;left:56.40px;top:368.00px;font-size:17px;line-height:30px;font-weight:400;color:#222;white-space:nowrap;"><span style="display:inline-block;width:14.80px;white-space:pre">필</span><span style="display:inline-block;width:14.81px;white-space:pre">터</span></div>
<div id="freset" style="position:absolute;left:48.20px;top:394.50px;font-size:17px;line-height:30px;font-weight:400;color:#222;white-space:nowrap;"><span style="display:inline-block;width:14.12px;white-space:pre">필</span><span style="display:inline-block;width:14.14px;white-space:pre">터</span><span style="display:inline-block;width:4.72px;white-space:pre"> </span><span style="display:inline-block;width:14.12px;white-space:pre">리</span><span style="display:inline-block;width:14.16px;white-space:pre">셋</span></div>
<div id="kuk" style="position:absolute;left:124.00px;top:378.00px;font-size:17px;line-height:30px;font-weight:400;color:#9a9a9a;white-space:nowrap;"><span style="display:inline-block;width:12.39px;white-space:pre">국</span><span style="display:inline-block;width:12.42px;white-space:pre">가</span></div>
<div id="all" style="position:absolute;left:178.30px;top:377.50px;font-size:17px;line-height:30px;font-weight:400;color:#222;letter-spacing:0.700px;word-spacing:-0.700px;white-space:nowrap;">All</div>
<div id="rows" style="position:absolute;left:1393.70px;top:378.00px;font-size:17px;line-height:30px;font-weight:400;color:#222;white-space:nowrap;"><span style="display:inline-block;width:13.30px;white-space:pre">행</span><span style="display:inline-block;width:4.72px;white-space:pre"> </span><span style="display:inline-block;width:13.30px;white-space:pre">개</span><span style="display:inline-block;width:13.31px;white-space:pre">수</span></div>
<div id="ten" style="position:absolute;left:1472.20px;top:377.50px;font-size:17px;line-height:30px;font-weight:400;color:#222;white-space:nowrap;"><span style="display:inline-block;width:9.25px;white-space:pre">1</span><span style="display:inline-block;width:9.25px;white-space:pre">0</span><span style="display:inline-block;width:4.72px;white-space:pre"> </span><span style="display:inline-block;width:16.83px;white-space:pre">개</span></div>
<div id="eng" style="position:absolute;left:1576.40px;top:377.50px;font-size:17px;line-height:30px;font-weight:400;color:#222;letter-spacing:0.000px;word-spacing:-0.000px;white-space:nowrap;">English</div>
<div id="free" style="position:absolute;left:1749.40px;top:377.50px;font-size:17px;line-height:30px;font-weight:500;color:#2343b8;white-space:nowrap;"><span style="display:inline-block;width:14.06px;white-space:pre">자</span><span style="display:inline-block;width:14.06px;white-space:pre">유</span><span style="display:inline-block;width:4.72px;white-space:pre"> </span><span style="display:inline-block;width:14.08px;white-space:pre">분</span><span style="display:inline-block;width:14.08px;white-space:pre">석</span></div>
<div id="apply1" style="position:absolute;left:1892.50px;top:377.50px;font-size:17px;line-height:30px;font-weight:500;color:#f4f4f4;white-space:nowrap;"><span style="display:inline-block;width:14.36px;white-space:pre">분</span><span style="display:inline-block;width:14.36px;white-space:pre">석</span><span style="display:inline-block;width:4.72px;white-space:pre"> </span><span style="display:inline-block;width:14.36px;white-space:pre">적</span><span style="display:inline-block;width:14.36px;white-space:pre">용</span><span style="display:inline-block;width:14.36px;white-space:pre">하</span><span style="display:inline-block;width:14.38px;white-space:pre">기</span></div>
<div id="h_owner" style="position:absolute;left:1.50px;top:479.00px;font-size:17px;line-height:30px;font-weight:700;color:#111;white-space:nowrap;"><span style="display:inline-block;width:15.09px;white-space:pre">현</span><span style="display:inline-block;width:15.09px;white-space:pre">재</span><span style="display:inline-block;width:4.73px;white-space:pre"> </span><span style="display:inline-block;width:15.09px;white-space:pre">권</span><span style="display:inline-block;width:15.09px;white-space:pre">리</span><span style="display:inline-block;width:15.12px;white-space:pre">자</span></div>
<div id="h_sub" style="position:absolute;left:219.60px;top:479.00px;font-size:17px;line-height:30px;font-weight:700;color:#111;white-space:nowrap;"><span style="display:inline-block;width:15.75px;white-space:pre">상</span><span style="display:inline-block;width:15.75px;white-space:pre">위</span><span style="display:inline-block;width:4.72px;white-space:pre"> </span><span style="display:inline-block;width:15.77px;white-space:pre">기</span><span style="display:inline-block;width:15.75px;white-space:pre">술</span><span style="display:inline-block;width:4.41px;white-space:pre">(</span><span style="display:inline-block;width:10.09px;white-space:pre">S</span><span style="display:inline-block;width:11.03px;white-space:pre">U</span><span style="display:inline-block;width:11.03px;white-space:pre">B</span><span style="display:inline-block;width:11.03px;white-space:pre">C</span><span style="display:inline-block;width:9.14px;white-space:pre">L</span><span style="display:inline-block;width:11.03px;white-space:pre">A</span><span style="display:inline-block;width:10.09px;white-space:pre">S</span><span style="display:inline-block;width:10.09px;white-space:pre">S</span><span style="display:inline-block;width:4.44px;white-space:pre">)</span></div>
<div id="h_main" style="position:absolute;left:436.50px;top:479.00px;font-size:17px;line-height:30px;font-weight:700;color:#111;white-space:nowrap;"><span style="display:inline-block;width:15.72px;white-space:pre">중</span><span style="display:inline-block;width:15.73px;white-space:pre">위</span><span style="display:inline-block;width:4.72px;white-space:pre"> </span><span style="display:inline-block;width:15.73px;white-space:pre">기</span><span style="display:inline-block;width:15.72px;white-space:pre">술</span><span style="display:inline-block;width:4.39px;white-space:pre">(</span><span style="display:inline-block;width:12.89px;white-space:pre">M</span><span style="display:inline-block;width:11.02px;white-space:pre">A</span><span style="display:inline-block;width:3.45px;white-space:pre">I</span><span style="display:inline-block;width:11.00px;white-space:pre">N</span><span style="display:inline-block;width:4.72px;white-space:pre"> </span><span style="display:inline-block;width:11.95px;white-space:pre">G</span><span style="display:inline-block;width:11.02px;white-space:pre">R</span><span style="display:inline-block;width:11.95px;white-space:pre">O</span><span style="display:inline-block;width:11.00px;white-space:pre">U</span><span style="display:inline-block;width:10.06px;white-space:pre">P</span><span style="display:inline-block;width:4.41px;white-space:pre">)</span></div>
<div id="h_year" style="position:absolute;left:654.60px;top:437.50px;font-size:17px;line-height:30px;font-weight:700;color:#111;white-space:nowrap;"><span style="display:inline-block;width:15.25px;white-space:pre">최</span><span style="display:inline-block;width:15.25px;white-space:pre">종</span><span style="display:inline-block;width:4.73px;white-space:pre"> </span><span style="display:inline-block;width:15.25px;white-space:pre">양</span><span style="display:inline-block;width:15.27px;white-space:pre">도</span><span style="display:inline-block;width:4.72px;white-space:pre"> </span><span style="display:inline-block;width:15.25px;white-space:pre">기</span><span style="display:inline-block;width:15.27px;white-space:pre">록</span><span style="display:inline-block;width:4.72px;white-space:pre"> </span><span style="display:inline-block;width:15.25px;white-space:pre">연</span><span style="display:inline-block;width:15.28px;white-space:pre">도</span></div>
<div id="yr0" style="position:absolute;left:654.00px;top:480.30px;font-size:17.5px;line-height:24px;font-weight:400;color:#222;letter-spacing:-1.000px;word-spacing:1.000px;white-space:nowrap;">2012</div>
<div id="yr1" style="position:absolute;left:749.30px;top:480.30px;font-size:17.5px;line-height:24px;font-weight:400;color:#222;letter-spacing:-1.333px;word-spacing:1.333px;white-space:nowrap;">2013</div>
<div id="yr2" style="position:absolute;left:844.40px;top:480.30px;font-size:17.5px;line-height:24px;font-weight:400;color:#222;letter-spacing:-1.333px;word-spacing:1.333px;white-space:nowrap;">2016</div>
<div id="yr3" style="position:absolute;left:939.50px;top:480.30px;font-size:17.5px;line-height:24px;font-weight:400;color:#222;letter-spacing:-1.000px;word-spacing:1.000px;white-space:nowrap;">2017</div>
<div id="yr4" style="position:absolute;left:1034.60px;top:480.30px;font-size:17.5px;line-height:24px;font-weight:400;color:#222;letter-spacing:-1.333px;word-spacing:1.333px;white-space:nowrap;">2018</div>
<div id="yr5" style="position:absolute;left:1130.70px;top:480.30px;font-size:17.5px;line-height:24px;font-weight:400;color:#222;letter-spacing:-1.333px;word-spacing:1.333px;white-space:nowrap;">2019</div>
<div id="yr6" style="position:absolute;left:1225.80px;top:480.30px;font-size:17.5px;line-height:24px;font-weight:400;color:#222;letter-spacing:-1.333px;word-spacing:1.333px;white-space:nowrap;">2020</div>
<div id="yr7" style="position:absolute;left:1321.20px;top:480.30px;font-size:17.5px;line-height:24px;font-weight:400;color:#222;letter-spacing:-1.333px;word-spacing:1.333px;white-space:nowrap;">2021</div>
<div id="ra0" style="position:absolute;left:16.30px;top:522.60px;font-size:17px;line-height:24px;font-weight:400;color:#222;letter-spacing:-1.140px;word-spacing:1.140px;white-space:nowrap;">LG Energy Solution</div>
<div id="rb0" style="position:absolute;left:233.70px;top:522.60px;font-size:17px;line-height:24px;font-weight:400;color:#222;letter-spacing:-1.063px;word-spacing:1.063px;white-space:nowrap;">Processes or means for…</div>
<div id="rc0" style="position:absolute;left:436.70px;top:521.10px;font-size:17px;line-height:24px;font-weight:400;color:#222;letter-spacing:-1.012px;word-spacing:1.012px;white-space:nowrap;">Constructional details or p…</div>
<div id="rv0_7" style="position:absolute;left:1388.00px;top:520.80px;font-size:17.5px;line-height:24px;font-weight:400;color:#222;letter-spacing:-1.600px;word-spacing:1.600px;white-space:nowrap;">29</div>
<div id="rc1" style="position:absolute;left:436.70px;top:561.90px;font-size:17px;line-height:24px;font-weight:400;color:#222;letter-spacing:-1.043px;word-spacing:1.043px;white-space:nowrap;">Secondary cells [H01M10…</div>
<div id="rv1_7" style="position:absolute;left:1388.00px;top:561.60px;font-size:17.5px;line-height:24px;font-weight:400;color:#222;letter-spacing:-1.600px;word-spacing:1.600px;white-space:nowrap;">10</div>
<div id="rc2" style="position:absolute;left:436.70px;top:602.70px;font-size:17px;line-height:24px;font-weight:400;color:#222;letter-spacing:-0.995px;word-spacing:0.995px;white-space:nowrap;">Electrodes [H01M4/00]</div>
<div id="rv2_7" style="position:absolute;left:1396.80px;top:602.40px;font-size:17.5px;line-height:24px;font-weight:400;color:#222;letter-spacing:0.000px;word-spacing:-0.000px;white-space:nowrap;">3</div>
<div id="rb3" style="position:absolute;left:233.70px;top:645.00px;font-size:17px;line-height:24px;font-weight:400;color:#222;letter-spacing:-1.067px;word-spacing:1.067px;white-space:nowrap;">Electric equipment or pr…</div>
<div id="rc3" style="position:absolute;left:436.70px;top:643.50px;font-size:17px;line-height:24px;font-weight:400;color:#222;letter-spacing:-1.039px;word-spacing:1.039px;white-space:nowrap;">Methods or circuit arrange…</div>
<div id="rv3_7" style="position:absolute;left:1395.80px;top:643.20px;font-size:17.5px;line-height:24px;font-weight:400;color:#222;letter-spacing:0.000px;word-spacing:-0.000px;white-space:nowrap;">1</div>
<div id="rc4" style="position:absolute;left:436.70px;top:684.30px;font-size:17px;line-height:24px;font-weight:400;color:#222;letter-spacing:-1.036px;word-spacing:1.036px;white-space:nowrap;">Electric devices on electric…</div>
<div id="rv4_7" style="position:absolute;left:1395.80px;top:684.00px;font-size:17.5px;line-height:24px;font-weight:400;color:#222;letter-spacing:0.000px;word-spacing:-0.000px;white-space:nowrap;">1</div>
<div id="ra5" style="position:absolute;left:16.30px;top:726.60px;font-size:17px;line-height:24px;font-weight:400;color:#222;letter-spacing:-1.011px;word-spacing:1.011px;white-space:nowrap;">Samsung Sdi</div>
<div id="rb5" style="position:absolute;left:233.70px;top:726.60px;font-size:17px;line-height:24px;font-weight:400;color:#222;letter-spacing:-1.063px;word-spacing:1.063px;white-space:nowrap;">Processes or means for…</div>
<div id="rc5" style="position:absolute;left:436.70px;top:725.10px;font-size:17px;line-height:24px;font-weight:400;color:#222;letter-spacing:-1.012px;word-spacing:1.012px;white-space:nowrap;">Constructional details or p…</div>
<div id="rv5_0" style="position:absolute;left:729.80px;top:724.80px;font-size:17.5px;line-height:24px;font-weight:400;color:#222;letter-spacing:0.000px;word-spacing:-0.000px;white-space:nowrap;">6</div>
<div id="rv5_1" style="position:absolute;left:824.90px;top:724.80px;font-size:17.5px;line-height:24px;font-weight:400;color:#222;letter-spacing:0.000px;word-spacing:-0.000px;white-space:nowrap;">3</div>
<div id="rc6" style="position:absolute;left:436.70px;top:765.90px;font-size:17px;line-height:24px;font-weight:400;color:#222;letter-spacing:-1.043px;word-spacing:1.043px;white-space:nowrap;">Secondary cells [H01M10…</div>
<div id="rv6_0" style="position:absolute;left:728.80px;top:765.60px;font-size:17.5px;line-height:24px;font-weight:400;color:#222;letter-spacing:0.000px;word-spacing:-0.000px;white-space:nowrap;">1</div>
<div id="ra7" style="position:absolute;left:16.30px;top:808.20px;font-size:17px;line-height:24px;font-weight:400;color:#222;letter-spacing:-1.105px;word-spacing:1.105px;white-space:nowrap;">Cps Technology Holdings</div>
<div id="rb7" style="position:absolute;left:233.70px;top:808.20px;font-size:17px;line-height:24px;font-weight:400;color:#222;letter-spacing:-1.063px;word-spacing:1.063px;white-space:nowrap;">Processes or means for…</div>
<div id="rc7" style="position:absolute;left:436.70px;top:806.70px;font-size:17px;line-height:24px;font-weight:400;color:#222;letter-spacing:-1.012px;word-spacing:1.012px;white-space:nowrap;">Constructional details or p…</div>
<div id="rv7_5" style="position:absolute;left:1206.30px;top:806.40px;font-size:17.5px;line-height:24px;font-weight:400;color:#222;letter-spacing:0.000px;word-spacing:-0.000px;white-space:nowrap;">8</div>
<div id="rc8" style="position:absolute;left:436.70px;top:847.50px;font-size:17px;line-height:24px;font-weight:400;color:#222;letter-spacing:-1.043px;word-spacing:1.043px;white-space:nowrap;">Secondary cells [H01M10…</div>
<div id="rv8_5" style="position:absolute;left:1206.30px;top:847.20px;font-size:17.5px;line-height:24px;font-weight:400;color:#222;letter-spacing:0.000px;word-spacing:-0.000px;white-space:nowrap;">2</div>
<div id="ra9" style="position:absolute;left:16.30px;top:889.80px;font-size:17px;line-height:24px;font-weight:400;color:#222;letter-spacing:-1.025px;word-spacing:1.025px;white-space:nowrap;">Bosch</div>
<div id="rb9" style="position:absolute;left:233.70px;top:889.80px;font-size:17px;line-height:24px;font-weight:400;color:#222;letter-spacing:-1.063px;word-spacing:1.063px;white-space:nowrap;">Processes or means for…</div>
<div id="rc9" style="position:absolute;left:436.70px;top:888.30px;font-size:17px;line-height:24px;font-weight:400;color:#222;letter-spacing:-1.012px;word-spacing:1.012px;white-space:nowrap;">Constructional details or p…</div>
<div id="rv9_0" style="position:absolute;left:729.80px;top:888.00px;font-size:17.5px;line-height:24px;font-weight:400;color:#222;letter-spacing:0.000px;word-spacing:-0.000px;white-space:nowrap;">6</div>
<div id="rv9_1" style="position:absolute;left:824.90px;top:888.00px;font-size:17.5px;line-height:24px;font-weight:400;color:#222;letter-spacing:0.000px;word-spacing:-0.000px;white-space:nowrap;">3</div>
<div id="rc10" style="position:absolute;left:436.70px;top:929.10px;font-size:17px;line-height:24px;font-weight:400;color:#222;letter-spacing:-1.043px;word-spacing:1.043px;white-space:nowrap;">Secondary cells [H01M10…</div>
<div id="rv10_0" style="position:absolute;left:728.80px;top:928.80px;font-size:17.5px;line-height:24px;font-weight:400;color:#222;letter-spacing:0.000px;word-spacing:-0.000px;white-space:nowrap;">1</div>
<div id="ra11" style="position:absolute;left:16.30px;top:971.40px;font-size:17px;line-height:24px;font-weight:400;color:#222;letter-spacing:-1.061px;word-spacing:1.061px;white-space:nowrap;">Murata Manufacturing</div>
<div id="rb11" style="position:absolute;left:233.70px;top:971.40px;font-size:17px;line-height:24px;font-weight:400;color:#222;letter-spacing:-1.063px;word-spacing:1.063px;white-space:nowrap;">Processes or means for…</div>
<div id="rc11" style="position:absolute;left:436.70px;top:969.90px;font-size:17px;line-height:24px;font-weight:400;color:#222;letter-spacing:-0.995px;word-spacing:0.995px;white-space:nowrap;">Electrodes [H01M4/00]</div>
<div id="rv11_3" style="position:absolute;left:1015.10px;top:969.60px;font-size:17.5px;line-height:24px;font-weight:400;color:#222;letter-spacing:0.000px;word-spacing:-0.000px;white-space:nowrap;">2</div>
<div id="rv11_4" style="position:absolute;left:1111.20px;top:969.60px;font-size:17.5px;line-height:24px;font-weight:400;color:#222;letter-spacing:0.000px;word-spacing:-0.000px;white-space:nowrap;">2</div>
<div id="rc12" style="position:absolute;left:436.70px;top:1010.70px;font-size:17px;line-height:24px;font-weight:400;color:#222;letter-spacing:-1.043px;word-spacing:1.043px;white-space:nowrap;">Secondary cells [H01M10…</div>
<div id="rv12_4" style="position:absolute;left:1111.20px;top:1010.40px;font-size:17.5px;line-height:24px;font-weight:400;color:#222;letter-spacing:0.000px;word-spacing:-0.000px;white-space:nowrap;">2</div>
<div id="rc13" style="position:absolute;left:436.70px;top:1051.50px;font-size:17px;line-height:24px;font-weight:400;color:#222;letter-spacing:-1.012px;word-spacing:1.012px;white-space:nowrap;">Constructional details or p…</div>
<div id="rv13_3" style="position:absolute;left:1015.10px;top:1051.20px;font-size:17.5px;line-height:24px;font-weight:400;color:#222;letter-spacing:0.000px;word-spacing:-0.000px;white-space:nowrap;">1</div>
<div id="ra14" style="position:absolute;left:17.30px;top:1093.80px;font-size:17px;line-height:24px;font-weight:400;color:#222;letter-spacing:-1.258px;word-spacing:1.258px;white-space:nowrap;">Vehicle Energy</div>
<div id="rb14" style="position:absolute;left:233.70px;top:1093.80px;font-size:17px;line-height:24px;font-weight:400;color:#222;letter-spacing:-1.063px;word-spacing:1.063px;white-space:nowrap;">Processes or means for…</div>
<div id="rc14" style="position:absolute;left:436.70px;top:1092.30px;font-size:17px;line-height:24px;font-weight:400;color:#222;letter-spacing:-1.012px;word-spacing:1.012px;white-space:nowrap;">Constructional details or p…</div>
<div id="rv14_6" style="position:absolute;left:1301.70px;top:1092.00px;font-size:17.5px;line-height:24px;font-weight:400;color:#222;letter-spacing:0.000px;word-spacing:-0.000px;white-space:nowrap;">5</div>
<div id="rc15" style="position:absolute;left:436.70px;top:1133.10px;font-size:17px;line-height:24px;font-weight:400;color:#222;letter-spacing:-1.043px;word-spacing:1.043px;white-space:nowrap;">Secondary cells [H01M10…</div>
<div id="rv15_6" style="position:absolute;left:1300.70px;top:1132.80px;font-size:17.5px;line-height:24px;font-weight:400;color:#222;letter-spacing:0.000px;word-spacing:-0.000px;white-space:nowrap;">1</div>
<div id="ra16" style="position:absolute;left:17.30px;top:1175.40px;font-size:17px;line-height:24px;font-weight:400;color:#222;letter-spacing:-1.162px;word-spacing:1.162px;white-space:nowrap;">Tiveni Mergedco</div>
<div id="rb16" style="position:absolute;left:233.70px;top:1175.40px;font-size:17px;line-height:24px;font-weight:400;color:#222;letter-spacing:-1.063px;word-spacing:1.063px;white-space:nowrap;">Processes or means for…</div>
<div id="rc16" style="position:absolute;left:436.70px;top:1173.90px;font-size:17px;line-height:24px;font-weight:400;color:#222;letter-spacing:-1.043px;word-spacing:1.043px;white-space:nowrap;">Secondary cells [H01M10…</div>
<div id="rv16_5" style="position:absolute;left:1206.30px;top:1173.60px;font-size:17.5px;line-height:24px;font-weight:400;color:#222;letter-spacing:0.000px;word-spacing:-0.000px;white-space:nowrap;">3</div>
<div id="rc17" style="position:absolute;left:436.70px;top:1214.70px;font-size:17px;line-height:24px;font-weight:400;color:#222;letter-spacing:-1.012px;word-spacing:1.012px;white-space:nowrap;">Constructional details or p…</div>
<div id="rv17_5" style="position:absolute;left:1206.30px;top:1214.40px;font-size:17.5px;line-height:24px;font-weight:400;color:#222;letter-spacing:0.000px;word-spacing:-0.000px;white-space:nowrap;">2</div>
<div id="ra18" style="position:absolute;left:17.30px;top:1257.00px;font-size:17px;line-height:24px;font-weight:400;color:#222;letter-spacing:-1.210px;word-spacing:1.210px;white-space:nowrap;">VW Kraftwerk</div>
<div id="rb18" style="position:absolute;left:233.70px;top:1257.00px;font-size:17px;line-height:24px;font-weight:400;color:#222;letter-spacing:-1.063px;word-spacing:1.063px;white-space:nowrap;">Processes or means for…</div>
<div id="rc18" style="position:absolute;left:436.70px;top:1255.50px;font-size:17px;line-height:24px;font-weight:400;color:#222;letter-spacing:-1.043px;word-spacing:1.043px;white-space:nowrap;">Secondary cells [H01M10…</div>
<div id="rv18_5" style="position:absolute;left:1205.30px;top:1255.20px;font-size:17.5px;line-height:24px;font-weight:400;color:#222;letter-spacing:0.000px;word-spacing:-0.000px;white-space:nowrap;">1</div>
<div id="rc19" style="position:absolute;left:436.70px;top:1296.30px;font-size:17px;line-height:24px;font-weight:400;color:#222;letter-spacing:-1.012px;word-spacing:1.012px;white-space:nowrap;">Constructional details or p…</div>
<div id="rv19_5" style="position:absolute;left:1205.30px;top:1296.00px;font-size:17.5px;line-height:24px;font-weight:400;color:#222;letter-spacing:0.000px;word-spacing:-0.000px;white-space:nowrap;">1</div>
<div id="ra20" style="position:absolute;left:16.30px;top:1338.60px;font-size:17px;line-height:24px;font-weight:400;color:#222;letter-spacing:-1.367px;word-spacing:1.367px;white-space:nowrap;">Sony</div>
<div id="rb20" style="position:absolute;left:233.70px;top:1338.60px;font-size:17px;line-height:24px;font-weight:400;color:#222;letter-spacing:-1.063px;word-spacing:1.063px;white-space:nowrap;">Processes or means for…</div>
<div id="rc20" style="position:absolute;left:436.70px;top:1337.10px;font-size:17px;line-height:24px;font-weight:400;color:#222;letter-spacing:-1.043px;word-spacing:1.043px;white-space:nowrap;">Secondary cells [H01M10…</div>
<div id="rv20_3" style="position:absolute;left:1015.10px;top:1336.80px;font-size:17.5px;line-height:24px;font-weight:400;color:#222;letter-spacing:0.000px;word-spacing:-0.000px;white-space:nowrap;">1</div>
<div id="rc21" style="position:absolute;left:436.70px;top:1377.90px;font-size:17px;line-height:24px;font-weight:400;color:#222;letter-spacing:-1.012px;word-spacing:1.012px;white-space:nowrap;">Constructional details or p…</div>
<div id="rv21_4" style="position:absolute;left:1110.20px;top:1377.60px;font-size:17.5px;line-height:24px;font-weight:400;color:#222;letter-spacing:0.000px;word-spacing:-0.000px;white-space:nowrap;">1</div>
<div id="ra22" style="position:absolute;left:16.30px;top:1420.20px;font-size:17px;line-height:24px;font-weight:400;color:#222;letter-spacing:-1.061px;word-spacing:1.061px;white-space:nowrap;">Contemporary Ampere…</div>
<div id="rb22" style="position:absolute;left:233.70px;top:1420.20px;font-size:17px;line-height:24px;font-weight:400;color:#222;letter-spacing:-1.063px;word-spacing:1.063px;white-space:nowrap;">Processes or means for…</div>
<div id="rc22" style="position:absolute;left:436.70px;top:1418.70px;font-size:17px;line-height:24px;font-weight:400;color:#222;letter-spacing:-1.012px;word-spacing:1.012px;white-space:nowrap;">Constructional details or p…</div>
<div id="rv22_2" style="position:absolute;left:920.00px;top:1418.40px;font-size:17.5px;line-height:24px;font-weight:400;color:#222;letter-spacing:0.000px;word-spacing:-0.000px;white-space:nowrap;">1</div>
<div id="rv22_4" style="position:absolute;left:1110.20px;top:1418.40px;font-size:17.5px;line-height:24px;font-weight:400;color:#222;letter-spacing:0.000px;word-spacing:-0.000px;white-space:nowrap;">1</div>
<div id="pv" style="position:absolute;left:1526.50px;top:436.50px;font-size:17px;line-height:30px;font-weight:700;color:#1d47c8;white-space:nowrap;"><span style="display:inline-block;width:13.80px;white-space:pre">피</span><span style="display:inline-block;width:13.80px;white-space:pre">벗</span><span style="display:inline-block;width:4.72px;white-space:pre"> </span><span style="display:inline-block;width:13.80px;white-space:pre">필</span><span style="display:inline-block;width:13.83px;white-space:pre">드</span></div>
<div id="pk" style="position:absolute;left:1525.00px;top:477.50px;font-size:17px;line-height:30px;font-weight:400;color:#555;white-space:nowrap;"><span style="display:inline-block;width:13.00px;white-space:pre">국</span><span style="display:inline-block;width:13.00px;white-space:pre">가</span></div>
<div id="pin" style="position:absolute;left:1498.00px;top:528.00px;font-size:17px;line-height:30px;font-weight:700;color:#1d47c8;white-space:nowrap;"><span style="display:inline-block;width:13.80px;white-space:pre">입</span><span style="display:inline-block;width:13.80px;white-space:pre">력</span><span style="display:inline-block;width:4.72px;white-space:pre"> </span><span style="display:inline-block;width:13.80px;white-space:pre">특</span><span style="display:inline-block;width:13.81px;white-space:pre">허</span><span style="display:inline-block;width:4.72px;white-space:pre"> </span><span style="display:inline-block;width:13.80px;white-space:pre">속</span><span style="display:inline-block;width:13.81px;white-space:pre">성</span></div>
<div id="pl0" style="position:absolute;left:1525.00px;top:568.00px;font-size:17px;line-height:30px;font-weight:400;color:#555;white-space:nowrap;"><span style="display:inline-block;width:14.66px;white-space:pre">특</span><span style="display:inline-block;width:14.67px;white-space:pre">허</span><span style="display:inline-block;width:4.72px;white-space:pre"> </span><span style="display:inline-block;width:2.39px;white-space:pre">I</span><span style="display:inline-block;width:9.97px;white-space:pre">D</span></div>
<div id="pl1" style="position:absolute;left:1525.00px;top:596.46px;font-size:17px;line-height:30px;font-weight:400;color:#555;white-space:nowrap;"><span style="display:inline-block;width:14.33px;white-space:pre">심</span><span style="display:inline-block;width:14.33px;white-space:pre">사</span><span style="display:inline-block;width:14.33px;white-space:pre">관</span><span style="display:inline-block;width:4.73px;white-space:pre"> </span><span style="display:inline-block;width:14.33px;white-space:pre">피</span><span style="display:inline-block;width:14.33px;white-space:pre">인</span><span style="display:inline-block;width:14.34px;white-space:pre">용</span><span style="display:inline-block;width:14.34px;white-space:pre">수</span></div>
<div id="pl2" style="position:absolute;left:1526.00px;top:624.92px;font-size:17px;line-height:30px;font-weight:400;color:#555;white-space:nowrap;"><span style="display:inline-block;width:14.25px;white-space:pre">해</span><span style="display:inline-block;width:14.25px;white-space:pre">외</span><span style="display:inline-block;width:4.72px;white-space:pre"> </span><span style="display:inline-block;width:14.25px;white-space:pre">심</span><span style="display:inline-block;width:14.25px;white-space:pre">사</span><span style="display:inline-block;width:14.25px;white-space:pre">관</span><span style="display:inline-block;width:4.72px;white-space:pre"> </span><span style="display:inline-block;width:14.25px;white-space:pre">피</span><span style="display:inline-block;width:14.25px;white-space:pre">인</span><span style="display:inline-block;width:14.25px;white-space:pre">용</span><span style="display:inline-block;width:14.27px;white-space:pre">수</span></div>
<div id="pl3" style="position:absolute;left:1525.00px;top:653.38px;font-size:17px;line-height:30px;font-weight:400;color:#555;white-space:nowrap;"><span style="display:inline-block;width:14.33px;white-space:pre">피</span><span style="display:inline-block;width:14.33px;white-space:pre">인</span><span style="display:inline-block;width:14.33px;white-space:pre">용</span><span style="display:inline-block;width:14.36px;white-space:pre">수</span></div>
<div id="pl4" style="position:absolute;left:1525.00px;top:681.84px;font-size:17px;line-height:30px;font-weight:400;color:#555;white-space:nowrap;"><span style="display:inline-block;width:9.47px;white-space:pre">S</span><span style="display:inline-block;width:7.61px;white-space:pre">e</span><span style="display:inline-block;width:1.91px;white-space:pre">l</span><span style="display:inline-block;width:2.88px;white-space:pre">f</span><span style="display:inline-block;width:4.72px;white-space:pre"> </span><span style="display:inline-block;width:15.14px;white-space:pre">피</span><span style="display:inline-block;width:15.14px;white-space:pre">인</span><span style="display:inline-block;width:15.16px;white-space:pre">용</span><span style="display:inline-block;width:15.16px;white-space:pre">수</span></div>
<div id="pl5" style="position:absolute;left:1526.00px;top:710.30px;font-size:17px;line-height:30px;font-weight:400;color:#555;white-space:nowrap;"><span style="display:inline-block;width:14.03px;white-space:pre">해</span><span style="display:inline-block;width:14.05px;white-space:pre">외</span><span style="display:inline-block;width:4.72px;white-space:pre"> </span><span style="display:inline-block;width:14.03px;white-space:pre">패</span><span style="display:inline-block;width:14.05px;white-space:pre">밀</span><span style="display:inline-block;width:14.05px;white-space:pre">리</span><span style="display:inline-block;width:14.05px;white-space:pre">수</span></div>
<div id="pl6" style="position:absolute;left:1525.00px;top:738.76px;font-size:17px;line-height:30px;font-weight:400;color:#555;white-space:nowrap;"><span style="display:inline-block;width:14.23px;white-space:pre">국</span><span style="display:inline-block;width:14.23px;white-space:pre">내</span><span style="display:inline-block;width:4.73px;white-space:pre"> </span><span style="display:inline-block;width:14.23px;white-space:pre">패</span><span style="display:inline-block;width:14.23px;white-space:pre">밀</span><span style="display:inline-block;width:14.25px;white-space:pre">리</span><span style="display:inline-block;width:14.25px;white-space:pre">수</span></div>
<div id="pl7" style="position:absolute;left:1525.00px;top:767.22px;font-size:17px;line-height:30px;font-weight:400;color:#555;white-space:nowrap;"><span style="display:inline-block;width:14.00px;white-space:pre">양</span><span style="display:inline-block;width:14.00px;white-space:pre">도</span><span style="display:inline-block;width:14.00px;white-space:pre">수</span></div>
<div id="pl8" style="position:absolute;left:1524.00px;top:795.68px;font-size:17px;line-height:30px;font-weight:400;color:#555;white-space:nowrap;"><span style="display:inline-block;width:14.50px;white-space:pre">소</span><span style="display:inline-block;width:14.50px;white-space:pre">송</span><span style="display:inline-block;width:14.50px;white-space:pre">수</span></div>
<div id="pl9" style="position:absolute;left:1525.00px;top:824.14px;font-size:17px;line-height:30px;font-weight:400;color:#555;white-space:nowrap;"><span style="display:inline-block;width:14.00px;white-space:pre">심</span><span style="display:inline-block;width:14.00px;white-space:pre">판</span><span style="display:inline-block;width:14.00px;white-space:pre">수</span></div>
<div id="pl10" style="position:absolute;left:1524.00px;top:852.60px;font-size:17px;line-height:30px;font-weight:400;color:#555;white-space:nowrap;"><span style="display:inline-block;width:14.28px;white-space:pre">최</span><span style="display:inline-block;width:14.28px;white-space:pre">종</span><span style="display:inline-block;width:4.72px;white-space:pre"> </span><span style="display:inline-block;width:14.30px;white-space:pre">양</span><span style="display:inline-block;width:14.28px;white-space:pre">도</span><span style="display:inline-block;width:4.72px;white-space:pre"> </span><span style="display:inline-block;width:14.30px;white-space:pre">기</span><span style="display:inline-block;width:14.28px;white-space:pre">록</span><span style="display:inline-block;width:4.72px;white-space:pre"> </span><span style="display:inline-block;width:14.28px;white-space:pre">연</span><span style="display:inline-block;width:14.31px;white-space:pre">도</span></div>
<div id="pl11" style="position:absolute;left:1524.00px;top:881.06px;font-size:17px;line-height:30px;font-weight:400;color:#555;white-space:nowrap;"><span style="display:inline-block;width:14.39px;white-space:pre">최</span><span style="display:inline-block;width:14.41px;white-space:pre">근</span><span style="display:inline-block;width:4.72px;white-space:pre"> </span><span style="display:inline-block;width:14.41px;white-space:pre">소</span><span style="display:inline-block;width:14.39px;white-space:pre">송</span><span style="display:inline-block;width:4.72px;white-space:pre"> </span><span style="display:inline-block;width:14.41px;white-space:pre">연</span><span style="display:inline-block;width:14.42px;white-space:pre">도</span></div>
<div id="pl12" style="position:absolute;left:1524.00px;top:909.52px;font-size:17px;line-height:30px;font-weight:400;color:#555;white-space:nowrap;"><span style="display:inline-block;width:14.39px;white-space:pre">최</span><span style="display:inline-block;width:14.41px;white-space:pre">근</span><span style="display:inline-block;width:4.72px;white-space:pre"> </span><span style="display:inline-block;width:14.41px;white-space:pre">심</span><span style="display:inline-block;width:14.39px;white-space:pre">판</span><span style="display:inline-block;width:4.72px;white-space:pre"> </span><span style="display:inline-block;width:14.41px;white-space:pre">연</span><span style="display:inline-block;width:14.42px;white-space:pre">도</span></div>
<div id="pl13" style="position:absolute;left:1524.00px;top:937.98px;font-size:17px;line-height:30px;font-weight:400;color:#555;white-space:nowrap;"><span style="display:inline-block;width:14.66px;white-space:pre">등</span><span style="display:inline-block;width:14.67px;white-space:pre">록</span><span style="display:inline-block;width:14.67px;white-space:pre">연</span><span style="display:inline-block;width:14.67px;white-space:pre">도</span></div>
<div id="pl14" style="position:absolute;left:1524.00px;top:966.44px;font-size:17px;line-height:30px;font-weight:400;color:#555;white-space:nowrap;"><span style="display:inline-block;width:14.28px;white-space:pre">최</span><span style="display:inline-block;width:14.28px;white-space:pre">초</span><span style="display:inline-block;width:4.72px;white-space:pre"> </span><span style="display:inline-block;width:14.30px;white-space:pre">공</span><span style="display:inline-block;width:14.28px;white-space:pre">보</span><span style="display:inline-block;width:4.72px;white-space:pre"> </span><span style="display:inline-block;width:14.30px;white-space:pre">발</span><span style="display:inline-block;width:14.28px;white-space:pre">행</span><span style="display:inline-block;width:4.72px;white-space:pre"> </span><span style="display:inline-block;width:14.28px;white-space:pre">연</span><span style="display:inline-block;width:14.31px;white-space:pre">도</span></div>
<div id="sfilter" style="position:absolute;left:1522.00px;top:1001.50px;font-size:17px;line-height:30px;font-weight:400;color:#5a5a5a;letter-spacing:0.000px;word-spacing:-0.000px;white-space:nowrap;">Filter</div>
<div id="scol" style="position:absolute;left:1806.70px;top:1001.50px;font-size:17px;line-height:30px;font-weight:400;color:#5a5a5a;letter-spacing:0.120px;word-spacing:-0.120px;white-space:nowrap;">Column</div>
<div id="srow" style="position:absolute;left:1522.00px;top:1181.50px;font-size:17px;line-height:30px;font-weight:400;color:#5a5a5a;letter-spacing:-0.700px;word-spacing:0.700px;white-space:nowrap;">Row</div>
<div id="sval" style="position:absolute;left:1806.70px;top:1181.50px;font-size:17px;line-height:30px;font-weight:400;color:#5a5a5a;letter-spacing:-0.300px;word-spacing:0.300px;white-space:nowrap;">Value</div>
<div id="cf1" style="position:absolute;left:1502.00px;top:1040.50px;font-size:17px;line-height:30px;font-weight:400;color:#333;white-space:nowrap;"><span style="display:inline-block;width:13.34px;white-space:pre">현</span><span style="display:inline-block;width:13.34px;white-space:pre">재</span><span style="display:inline-block;width:4.73px;white-space:pre"> </span><span style="display:inline-block;width:13.34px;white-space:pre">권</span><span style="display:inline-block;width:13.34px;white-space:pre">리</span><span style="display:inline-block;width:13.38px;white-space:pre">자</span></div>
<div id="cc1" style="position:absolute;left:1785.60px;top:1040.50px;font-size:17px;line-height:30px;font-weight:400;color:#333;white-space:nowrap;"><span style="display:inline-block;width:13.77px;white-space:pre">최</span><span style="display:inline-block;width:13.77px;white-space:pre">종</span><span style="display:inline-block;width:4.72px;white-space:pre"> </span><span style="display:inline-block;width:13.78px;white-space:pre">양</span><span style="display:inline-block;width:13.77px;white-space:pre">도</span><span style="display:inline-block;width:4.72px;white-space:pre"> </span><span style="display:inline-block;width:13.78px;white-space:pre">기</span><span style="display:inline-block;width:13.77px;white-space:pre">록</span><span style="display:inline-block;width:4.72px;white-space:pre"> </span><span style="display:inline-block;width:13.78px;white-space:pre">연</span><span style="display:inline-block;width:13.78px;white-space:pre">도</span></div>
<div id="cr0" style="position:absolute;left:1502.00px;top:1220.50px;font-size:17px;line-height:30px;font-weight:400;color:#333;white-space:nowrap;"><span style="display:inline-block;width:13.34px;white-space:pre">현</span><span style="display:inline-block;width:13.34px;white-space:pre">재</span><span style="display:inline-block;width:4.73px;white-space:pre"> </span><span style="display:inline-block;width:13.34px;white-space:pre">권</span><span style="display:inline-block;width:13.34px;white-space:pre">리</span><span style="display:inline-block;width:13.38px;white-space:pre">자</span></div>
<div id="cr1" style="position:absolute;left:1502.00px;top:1256.00px;font-size:17px;line-height:30px;font-weight:400;color:#333;white-space:nowrap;"><span style="display:inline-block;width:15.27px;white-space:pre">상</span><span style="display:inline-block;width:15.28px;white-space:pre">위</span><span style="display:inline-block;width:4.72px;white-space:pre"> </span><span style="display:inline-block;width:15.28px;white-space:pre">기</span><span style="display:inline-block;width:15.28px;white-space:pre">술</span><span style="display:inline-block;width:3.94px;white-space:pre">(</span><span style="display:inline-block;width:9.61px;white-space:pre">S</span><span style="display:inline-block;width:7.73px;white-space:pre">u</span><span style="display:inline-block;width:7.73px;white-space:pre">b</span><span style="display:inline-block;width:6.78px;white-space:pre">c</span><span style="display:inline-block;width:2.05px;white-space:pre">l</span><span style="display:inline-block;width:7.73px;white-space:pre">a</span><span style="display:inline-block;width:6.78px;white-space:pre">s</span><span style="display:inline-block;width:6.77px;white-space:pre">s</span><span style="display:inline-block;width:3.95px;white-space:pre">)</span></div>
<div id="cr2" style="position:absolute;left:1502.00px;top:1291.80px;font-size:17px;line-height:30px;font-weight:400;color:#333;white-space:nowrap;"><span style="display:inline-block;width:15.84px;white-space:pre">중</span><span style="display:inline-block;width:15.86px;white-space:pre">위</span><span style="display:inline-block;width:4.72px;white-space:pre"> </span><span style="display:inline-block;width:15.86px;white-space:pre">기</span><span style="display:inline-block;width:15.86px;white-space:pre">술</span><span style="display:inline-block;width:4.52px;white-space:pre">(</span><span style="display:inline-block;width:13.02px;white-space:pre">M</span><span style="display:inline-block;width:8.31px;white-space:pre">a</span><span style="display:inline-block;width:2.64px;white-space:pre">i</span><span style="display:inline-block;width:8.31px;white-space:pre">n</span><span style="display:inline-block;width:4.72px;white-space:pre"> </span><span style="display:inline-block;width:12.08px;white-space:pre">G</span><span style="display:inline-block;width:4.53px;white-space:pre">r</span><span style="display:inline-block;width:8.30px;white-space:pre">o</span><span style="display:inline-block;width:8.31px;white-space:pre">u</span><span style="display:inline-block;width:8.31px;white-space:pre">p</span><span style="display:inline-block;width:4.55px;white-space:pre">)</span></div>
<div id="cv1" style="position:absolute;left:1786.60px;top:1220.50px;font-size:17px;line-height:30px;font-weight:400;color:#555;letter-spacing:-0.780px;word-spacing:0.780px;white-space:nowrap;">distinct...</div>
<div id="cv2" style="position:absolute;left:1875.10px;top:1220.50px;font-size:17px;line-height:30px;font-weight:400;color:#333;white-space:nowrap;"><span style="display:inline-block;width:14.53px;white-space:pre">특</span><span style="display:inline-block;width:14.53px;white-space:pre">허</span><span style="display:inline-block;width:4.72px;white-space:pre"> </span><span style="display:inline-block;width:2.25px;white-space:pre">I</span><span style="display:inline-block;width:9.83px;white-space:pre">D</span></div>
<div id="apply2" style="position:absolute;left:1714.20px;top:1387.50px;font-size:18px;line-height:30px;font-weight:700;color:#ffffff;white-space:nowrap;"><span style="display:inline-block;width:16.72px;white-space:pre">분</span><span style="display:inline-block;width:16.72px;white-space:pre">석</span><span style="display:inline-block;width:5.00px;white-space:pre"> </span><span style="display:inline-block;width:16.72px;white-space:pre">적</span><span style="display:inline-block;width:16.72px;white-space:pre">용</span><span style="display:inline-block;width:16.72px;white-space:pre">하</span><span style="display:inline-block;width:16.73px;white-space:pre">기</span></div>
</body></html>
